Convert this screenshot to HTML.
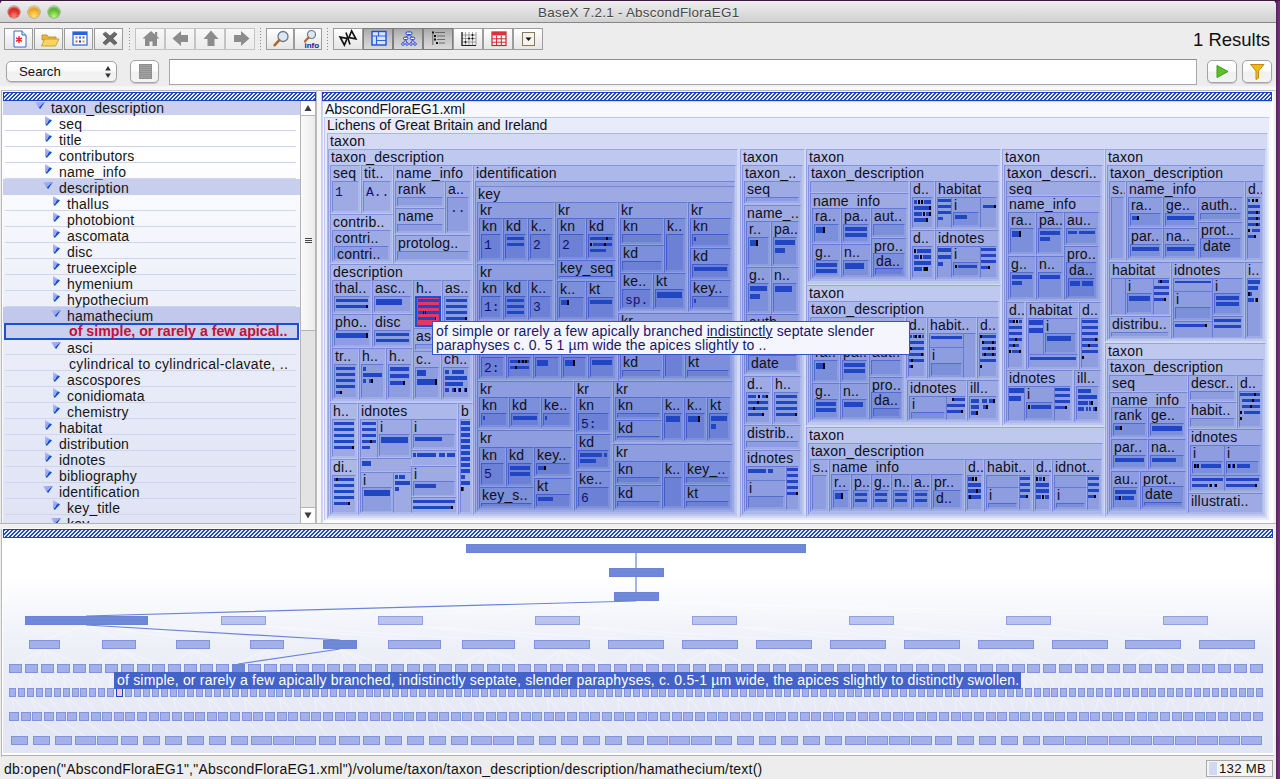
<!DOCTYPE html><html><head><meta charset="utf-8"><title>BaseX 7.2.1 - AbscondFloraEG1</title><style>
*{box-sizing:border-box;margin:0;padding:0}
html,body{width:1280px;height:779px;overflow:hidden;background:linear-gradient(90deg,#4b1d52 1276px,#5a2060 1276.5px,#7c2a7e 1279px);font-family:"Liberation Sans",sans-serif;font-size:14px;color:#111}
#win{position:absolute;left:0;top:0;width:1276px;height:779px;background:#ededed;border-radius:5px 5px 0 0;overflow:hidden}
#title{position:absolute;left:0;top:0;width:1276px;height:23px;background:linear-gradient(#f0f0f0,#d0d0d0);border-bottom:1px solid #868686;text-align:center;line-height:25px;font-size:13.4px;letter-spacing:.27px;color:#484848;text-shadow:0 1px 0 rgba(255,255,255,.55);border-radius:5px 5px 0 0}
#title span{position:absolute;left:538px;top:0;white-space:nowrap}
.tl{position:absolute;top:6px;width:12px;height:12px;border-radius:6px}
.abs{position:absolute}
.tb{position:absolute;top:28px;height:22px;border:1px solid #9c9c9c;background:linear-gradient(#ffffff,#f1f1f1 50%,#e6e6e6)}
.tb.dis{border-color:#c4c4c4;background:linear-gradient(#f7f7f7,#ececec)}
.tb.on{border-color:#7e7e7e;background:linear-gradient(#a9a9a9,#c4c4c4 45%,#d9d9d9)}
.tb svg{position:absolute;left:0;top:-1px}
.sep{position:absolute;top:28px;width:1px;height:22px;background:repeating-linear-gradient(#8c8c8c 0 1px,transparent 1px 3px)}
.rb{position:absolute;border:1px solid #a4a4a4;border-radius:5px;background:linear-gradient(#ffffff,#fbfbfb 48%,#f0f0f0 52%,#f4f4f4);box-shadow:0 1px 1px rgba(0,0,0,.18)}
.hatch{position:absolute;height:9px;border:1px solid #1c3fc4;background:repeating-linear-gradient(135deg,#2447cc 0 1.25px,#eef0ff 1.25px 2.828px)}
.panel{position:absolute;overflow:hidden}
.row{position:absolute;left:0;width:297px;height:16px}.row:before{content:'';position:absolute;left:2px;top:15px;width:291px;height:1px;background:#cfd5ef}.row.hl:before,.row.ns:before{display:none}
.row.hl{background:rgba(150,162,222,.5)}
.row i{position:absolute;top:1px;width:9px;height:10px}
.row i.c{background:linear-gradient(115deg,#b9c0f4 0%,#9aa6f0 50%,#2f66e8 52%,#1b56e0 100%);clip-path:polygon(0 0,100% 50%,10% 100%,0 82%)}
.row i.c{background:linear-gradient(124deg,#b9c1f5 0%,#949fee 50%,#1650e0 52%);clip-path:polygon(0 0,0 80%,24% 100%,100% 46%)}
.row i.o{width:10px;height:7px;background:linear-gradient(138deg,#b4bcf2 0%,#949fee 56%,#1650e0 58%);clip-path:polygon(0 0,100% 0,52% 100%,34% 78%)}
.row b{position:absolute;top:1px;line-height:16px;font-weight:normal;white-space:nowrap;font-size:14px;color:#151515;letter-spacing:.2px}

#map{position:absolute;left:322px;top:101px;width:951px;height:422px;overflow:hidden;background:#fff}
#map div{position:absolute}
.m{border:1px solid;overflow:hidden}
.m b{position:absolute;left:2px;top:-1px;font-weight:normal;font-size:14px;line-height:16px;white-space:nowrap;color:#0e0e18;letter-spacing:.2px}
.t{font:13px "Liberation Mono",monospace;color:#101070;white-space:nowrap;line-height:14px}
.tip{background:#f4f5fd;border:1px solid #3453c4;color:#17176a;font-size:14px;line-height:14px;padding:2px 0 0 3px;white-space:nowrap;letter-spacing:.12px}
</style></head><body><div id="win"><div id="title"><div class="tl" style="left:8px;background:radial-gradient(circle at 50% 85%,#ff8a7a 0,#e5342c 45%,#c0221c 75%,#8e1512 100%);box-shadow:inset 0 2px 2px -1px rgba(255,255,255,.8),0 0 0 .5px rgba(90,20,20,.6)"></div><div class="tl" style="left:28px;background:radial-gradient(circle at 50% 85%,#ffe27a 0,#f2b22c 45%,#d8921a 75%,#9a6510 100%);box-shadow:inset 0 2px 2px -1px rgba(255,255,255,.8),0 0 0 .5px rgba(110,70,10,.6)"></div><div class="tl" style="left:48px;background:radial-gradient(circle at 50% 85%,#c2f08a 0,#6cc43c 45%,#46a424 75%,#2a7014 100%);box-shadow:inset 0 2px 2px -1px rgba(255,255,255,.8),0 0 0 .5px rgba(30,80,15,.6)"></div><span>BaseX 7.2.1 - AbscondFloraEG1</span></div><div class="tb " style="left:4px;width:29px"><svg width="27" height="20" viewBox="0 0 27 20"><path d="M9 3h8l4 4v12H9z" fill="#fff" stroke="#3a62c8" stroke-width="1"/><path d="M17 3v4h4" fill="#dfe6fb" stroke="#3a62c8" stroke-width="1"/><path d="M14 8v7M11 9.8l6 3.6M17 9.8l-6 3.6" stroke="#e8242c" stroke-width="1.4"/></svg></div><div class="tb " style="left:34px;width:29px"><svg width="27" height="20" viewBox="0 0 27 20"><path d="M7 7h5l1.5 2H21v3H7z" fill="#e9b93a" stroke="#b98a1b" stroke-width=".8"/><path d="M9.5 11H24l-3.5 7H6.5z" fill="#f7d560" stroke="#c0921f" stroke-width=".8"/></svg></div><div class="tb " style="left:64px;width:29px"><svg width="27" height="20" viewBox="0 0 27 20"><rect x="8" y="4" width="14" height="13" fill="#fff" stroke="#2a62d8" stroke-width="1.2"/><rect x="8" y="4" width="14" height="3" fill="#2a62d8"/><rect x="10.5" y="8.5" width="2" height="2" fill="#8a7fd0"/><rect x="14" y="8.5" width="2" height="2" fill="#2a62d8"/><rect x="17.5" y="8.5" width="2" height="2" fill="#1e9a2e"/><rect x="10.5" y="12.5" width="2" height="2" fill="#e0602a"/><rect x="14" y="12.5" width="2" height="2" fill="#1a3aa8"/><rect x="17.5" y="12.5" width="2" height="2" fill="#e0a020"/></svg></div><div class="tb " style="left:94px;width:29px"><svg width="27" height="20" viewBox="0 0 27 20"><path d="M8 6.200l2.600-2 4.400 4 4.400-4 2.600 2-4.300 4.300 4.300 4.300-2.600 2-4.400-4-4.400 4-2.600-2 4.300-4.300z" fill="#6a6a6a" stroke="#444" stroke-width=".8"/></svg></div><div class="sep" style="left:129px"></div><div class="tb dis" style="left:135px;width:30px"><svg width="28" height="20" viewBox="0 0 28 20"><path d="M15 3l-8.500 7.500h2.500v7.500h4.500v-4.500h3v4.500h4.500v-7.500h2.500z" fill="#8c8c8c"/><rect x="19" y="4" width="2.200" height="5" fill="#8c8c8c"/></svg></div><div class="tb dis" style="left:165px;width:30px"><svg width="28" height="20" viewBox="0 0 28 20"><path d="M6.500 10.500l8.500-7.500v4h7v7h-7v4z" fill="#8c8c8c"/></svg></div><div class="tb dis" style="left:195px;width:30px"><svg width="28" height="20" viewBox="0 0 28 20"><path d="M15 2.500l7.500 8.500h-4v7h-7v-7h-4z" fill="#8c8c8c"/></svg></div><div class="tb dis" style="left:225px;width:30px"><svg width="28" height="20" viewBox="0 0 28 20"><path d="M23.500 10.500l-8.500-7.500v4h-7v7h7v4z" fill="#8c8c8c"/></svg></div><div class="sep" style="left:260px"></div><div class="tb " style="left:266px;width:28px"><svg width="26" height="20" viewBox="0 0 26 20"><circle cx="16" cy="8.5" r="5" fill="#dbe8f4" stroke="#6e7a86" stroke-width="1.3"/><path d="M12.3 12.2l-4.6 5" stroke="#b5652a" stroke-width="2.6" stroke-linecap="round"/></svg></div><div class="tb " style="left:294px;width:28px"><svg width="26" height="20" viewBox="0 0 26 20"><circle cx="16.5" cy="6.5" r="4" fill="#dbe8f4" stroke="#6e7a86" stroke-width="1.2"/><path d="M13.5 9.5l-3.6 4" stroke="#b5652a" stroke-width="2.2" stroke-linecap="round"/><text x="9.5" y="19.5" font-family="Liberation Sans,sans-serif" font-size="8" font-weight="bold" fill="#10189a">info</text></svg></div><div class="sep" style="left:327px"></div><div class="tb " style="left:333px;width:30px"><svg width="28" height="20" viewBox="0 0 28 20"><g transform="rotate(-28 14 10)" fill="none" stroke="#111" stroke-width="1.7" stroke-linejoin="miter"><path d="M7.500 5.500l5.500 4.500-5.500 4.500z"/><path d="M20.500 5.500l-5.500 4.500 5.500 4.500z"/></g><path d="M12 4.500l4 12" stroke="#111" stroke-width="1.600"/></svg></div><div class="tb on" style="left:363px;width:30px"><svg width="28" height="20" viewBox="0 0 28 20"><rect x="8" y="3.500" width="14" height="13.500" fill="#d8e6fd" stroke="#1a50d8" stroke-width="1.400"/><path d="M8 8h14M12.500 8v9M12.500 12.500h9.500M14.500 3.500v4.500" stroke="#2a62e0" stroke-width="1.200"/></svg></div><div class="tb on" style="left:393px;width:30px"><svg width="28" height="20" viewBox="0 0 28 20"><rect x="12" y="4" width="6" height="2.6" rx="1.3" fill="#fff" stroke="#1838d8" stroke-width="1"/><rect x="9.5" y="9.2" width="4.4" height="2.4" rx="1.2" fill="#fff" stroke="#1838d8" stroke-width="1"/><rect x="16.3" y="9.2" width="4.4" height="2.4" rx="1.2" fill="#fff" stroke="#1838d8" stroke-width="1"/><path d="M15 6.8l-3.2 2.2M15 6.8l3.4 2.2M11.6 11.8l-2.4 3M11.6 11.8l1.5 3M18.5 11.8l-1.5 3M18.5 11.8l2.4 3" stroke="#1838d8" stroke-width=".8"/><circle cx="9" cy="16" r="1.3" fill="#fff" stroke="#1838d8" stroke-width=".9"/><circle cx="13" cy="16" r="1.3" fill="#fff" stroke="#1838d8" stroke-width=".9"/><circle cx="17" cy="16" r="1.3" fill="#fff" stroke="#1838d8" stroke-width=".9"/><circle cx="21" cy="16" r="1.3" fill="#fff" stroke="#1838d8" stroke-width=".9"/></svg></div><div class="tb on" style="left:423px;width:30px"><svg width="28" height="20" viewBox="0 0 28 20"><rect x="8" y="3.5" width="2" height="2" fill="#111"/><rect x="10" y="7" width="2" height="2" fill="#111"/><rect x="10" y="10.5" width="2" height="2" fill="#111"/><rect x="12" y="14" width="2" height="2" fill="#111"/><path d="M8.8 5v12M11 4.5h10M13 8h8M13 11.5h8M15 15h6" stroke="#6a6a6a" stroke-width="1"/></svg></div><div class="tb " style="left:453px;width:30px"><svg width="28" height="20" viewBox="0 0 28 20"><path d="M8 4v13.5h14M11.5 4v13.5M15 4v13.5M18.5 4v13.5M22 4v13.5M8 7h14M8 10.5h14M8 14h14" stroke="#8a8a8a" stroke-width=".8" fill="none"/><path d="M8 4v13.5h14" stroke="#222" stroke-width="1.2" fill="none"/><circle cx="11.5" cy="14" r="1" fill="#111"/><circle cx="15" cy="10.5" r="1" fill="#111"/><circle cx="18.500" cy="10.5" r="1" fill="#111"/><circle cx="18.5" cy="7" r="1" fill="#111"/></svg></div><div class="tb " style="left:483px;width:30px"><svg width="28" height="20" viewBox="0 0 28 20"><rect x="8" y="4" width="14" height="13.5" fill="#fff" stroke="#d8202c" stroke-width="1.2"/><rect x="8" y="4" width="14" height="3.4" fill="#e0303a"/><path d="M8 10.8h14M8 14.200h14M12.600 7.400v10M17.300 7.400v10" stroke="#d8202c" stroke-width="1"/></svg></div><div class="tb " style="left:513px;width:30px"><svg width="28" height="20" viewBox="0 0 28 20"><rect x="8.500" y="4.500" width="12" height="13" fill="#f6f3ea" stroke="#8a7a5a" stroke-width="1"/><path d="M11.500 9.500h6l-3 3.500z" fill="#111"/></svg></div><div class="abs" style="left:1193px;top:28px;font-size:18.5px;color:#111;white-space:nowrap;line-height:24px">1 Results</div><div class="rb" style="left:6px;top:61px;width:111px;height:21px"><span class="abs" style="left:12px;top:1px;line-height:18px;font-size:13.2px">Search</span><svg class="abs" style="left:97px;top:3px" width="8" height="14" viewBox="0 0 8 14"><path d="M1.200 5.500L4 1l2.800 4.500zM1.200 8.500L4 13l2.800-4.500z" fill="#333"/></svg></div><div class="rb" style="left:130px;top:60px;width:29px;height:23px"><div class="abs" style="left:8px;top:3px;width:13px;height:15px;background:repeating-linear-gradient(#a2a2a2 0 1px,#939393 1px 2px);border:1px solid #8e8e8e"></div></div><div class="abs" style="left:169px;top:59px;width:1028px;height:26px;background:#fff;border:1px solid #a8a8a8;border-top-color:#8e8e8e"></div><div class="rb" style="left:1207px;top:60px;width:30px;height:23px"><svg width="28" height="21" viewBox="0 0 28 21"><path d="M9 4.500l11 6-11 6z" fill="#5cc02a" stroke="#3e9a18" stroke-width="1"/></svg></div><div class="rb" style="left:1242px;top:60px;width:30px;height:23px"><svg width="28" height="21" viewBox="0 0 28 21"><path d="M7.500 3.500h13.500l-5.500 6.500v7l-2.500 1.500v-8.500z" fill="#f2b818" stroke="#c08a10" stroke-width="1"/></svg></div><div class="abs" style="left:0;top:86px;width:1276px;height:4px;background:linear-gradient(#f4f4f4,#fdfdfd)"></div><div class="abs" style="left:1px;top:90px;width:1274px;height:1px;background:#b9b9b9"></div><div class="abs" style="left:1px;top:90px;width:1px;height:667px;background:#b9b9b9"></div><div class="abs" style="left:2px;top:91px;width:1272px;height:433px;background:#fbfbfb"></div><div class="hatch" style="left:3px;top:92px;width:313px"></div><div class="panel" style="left:3px;top:101px;width:297px;height:422px;background:linear-gradient(#ffffff 0,#ffffff 12%,#eef0fa 45%,#dfe3f4 100%)"><div class="row hl" style="top:-2px"><i class="o" style="left:32px;top:3px"></i><b style="left:48px">taxon_description</b></div><div class="row" style="top:14px"><i class="c" style="left:42px;width:7px;height:10px;top:1px"></i><b style="left:56px">seq</b></div><div class="row" style="top:30px"><i class="c" style="left:42px;width:7px;height:10px;top:1px"></i><b style="left:56px">title</b></div><div class="row" style="top:46px"><i class="c" style="left:42px;width:7px;height:10px;top:1px"></i><b style="left:56px">contributors</b></div><div class="row" style="top:62px"><i class="c" style="left:42px;width:7px;height:10px;top:1px"></i><b style="left:56px">name_info</b></div><div class="row hl" style="top:78px"><i class="o" style="left:40px;top:3px"></i><b style="left:56px">description</b></div><div class="row" style="top:94px"><i class="c" style="left:50px;width:7px;height:10px;top:1px"></i><b style="left:64px">thallus</b></div><div class="row" style="top:110px"><i class="c" style="left:50px;width:7px;height:10px;top:1px"></i><b style="left:64px">photobiont</b></div><div class="row" style="top:126px"><i class="c" style="left:50px;width:7px;height:10px;top:1px"></i><b style="left:64px">ascomata</b></div><div class="row" style="top:142px"><i class="c" style="left:50px;width:7px;height:10px;top:1px"></i><b style="left:64px">disc</b></div><div class="row" style="top:158px"><i class="c" style="left:50px;width:7px;height:10px;top:1px"></i><b style="left:64px">trueexciple</b></div><div class="row" style="top:174px"><i class="c" style="left:50px;width:7px;height:10px;top:1px"></i><b style="left:64px">hymenium</b></div><div class="row" style="top:190px"><i class="c" style="left:50px;width:7px;height:10px;top:1px"></i><b style="left:64px">hypothecium</b></div><div class="row hl" style="top:206px"><i class="o" style="left:48px;top:3px"></i><b style="left:64px">hamathecium</b></div><div class="row ns" style="top:222px;left:1px;width:295px;height:17px;background:#c9cfec;border:2px solid #1a50d4"></div><div class="row ns" style="top:222px"><b style="left:66px;font-weight:bold;color:#c4103a;font-size:14.2px;letter-spacing:0;top:0">of simple, or rarely a few apical..</b></div><div class="row" style="top:238px"><i class="o" style="left:48px;top:3px"></i><b style="left:64px">asci</b></div><div class="row" style="top:254px"><b style="left:66px;letter-spacing:.32px">cylindrical to cylindrical-clavate, ..</b></div><div class="row" style="top:270px"><i class="c" style="left:50px;width:7px;height:10px;top:1px"></i><b style="left:64px">ascospores</b></div><div class="row" style="top:286px"><i class="c" style="left:50px;width:7px;height:10px;top:1px"></i><b style="left:64px">conidiomata</b></div><div class="row" style="top:302px"><i class="c" style="left:50px;width:7px;height:10px;top:1px"></i><b style="left:64px">chemistry</b></div><div class="row" style="top:318px"><i class="c" style="left:42px;width:7px;height:10px;top:1px"></i><b style="left:56px">habitat</b></div><div class="row" style="top:334px"><i class="c" style="left:42px;width:7px;height:10px;top:1px"></i><b style="left:56px">distribution</b></div><div class="row" style="top:350px"><i class="c" style="left:42px;width:7px;height:10px;top:1px"></i><b style="left:56px">idnotes</b></div><div class="row" style="top:366px"><i class="c" style="left:42px;width:7px;height:10px;top:1px"></i><b style="left:56px">bibliography</b></div><div class="row" style="top:382px"><i class="o" style="left:40px;top:3px"></i><b style="left:56px">identification</b></div><div class="row" style="top:398px"><i class="c" style="left:50px;width:7px;height:10px;top:1px"></i><b style="left:64px">key_title</b></div><div class="row" style="top:414px"><i class="o" style="left:48px;top:3px"></i><b style="left:64px">key</b></div></div><div class="abs" style="left:300px;top:101px;width:16px;height:422px;background:#e3e3e3;border-left:1px solid #b4b4b4;border-right:1px solid #b4b4b4"></div><div class="abs" style="left:301px;top:101px;width:14px;height:15px;background:#fdfdfd;border-bottom:1px solid #b4b4b4"><svg width="14" height="14" viewBox="0 0 14 14"><path d="M3.500 10L7 4l3.500 6z" fill="#3c3c3c"/></svg></div><div class="abs" style="left:301px;top:116px;width:14px;height:215px;background:linear-gradient(90deg,#fafafa,#ececec);border-bottom:1px solid #b4b4b4"><div class="abs" style="left:4px;top:122px;width:7px;height:1px;background:#444;box-shadow:0 2px 0 #444,0 4px 0 #444"></div></div><div class="abs" style="left:301px;top:507px;width:14px;height:16px;background:#fdfdfd;border-top:1px solid #b4b4b4"><svg width="14" height="14" viewBox="0 0 14 14"><path d="M3.500 4.500L7 10.500l3.500-6z" fill="#3c3c3c"/></svg></div><div class="abs" style="left:316px;top:91px;width:6px;height:433px;background:#f7f7f7;border-left:1px solid #bdbdbd;border-right:1px solid #cfcfcf"></div><div class="abs" style="left:0;top:523px;width:1276px;height:1px;background:#b4b4b4"></div><div class="abs" style="left:0;top:524px;width:1276px;height:5px;background:#f0f0f0"></div><div class="hatch" style="left:322px;top:92px;width:950px"></div><div id="map"><div class="m" style="left:0px;top:0px;width:950px;height:422px;background:#f7f8fe;border-color:#cdd4f2 #ffffff #ffffff #cdd4f2"><b><span style="letter-spacing:0">AbscondFloraEG1.xml</span></b></div><div class="m" style="left:2px;top:16px;width:946px;height:404px;background:#e8ebfa;border-color:#bec7ee #fafbff #fafbff #bec7ee"><b><span style="letter-spacing:0">Lichens of Great Britain and Ireland</span></b></div><div class="m" style="left:5px;top:32px;width:941px;height:386px;background:#d4daf4;border-color:#aab6e8 #e6eafa #e6eafa #aab6e8"><b>taxon</b></div><div class="m" style="left:6px;top:48px;width:410px;height:368px;background:#bfc8ee;border-color:#95a4e2 #d1d8f4 #d1d8f4 #95a4e2"><b>taxon_description</b></div><div class="m" style="left:8px;top:64px;width:31px;height:49px;background:#acb8e9;border-color:#8294dd #bec8ef #bec8ef #8294dd"><b>seq</b></div><div class="m" style="left:10px;top:80px;width:27px;height:31px;background:#9daae4;border-color:#7386d8 #afbaea #afbaea #7386d8"></div><div class="t" style="left:13px;top:85px">1</div><div class="m" style="left:39px;top:64px;width:32px;height:49px;background:#acb8e9;border-color:#8294dd #bec8ef #bec8ef #8294dd"><b>tit..</b></div><div class="m" style="left:41px;top:80px;width:28px;height:31px;background:#9daae4;border-color:#7386d8 #afbaea #afbaea #7386d8"></div><div class="t" style="left:44px;top:85px">A..</div><div class="m" style="left:71px;top:64px;width:80px;height:99px;background:#acb8e9;border-color:#8294dd #bec8ef #bec8ef #8294dd"><b>name_info</b></div><div class="m" style="left:73px;top:80px;width:50px;height:27px;background:#9daae4;border-color:#7386d8 #afbaea #afbaea #7386d8"><b>rank</b></div><div class="m" style="left:75px;top:96px;width:46px;height:9px;background:#8d9de0;border-color:#6379d4 #9fade6 #9fade6 #6379d4"></div><div class="m" style="left:123px;top:80px;width:26px;height:53px;background:#9daae4;border-color:#7386d8 #afbaea #afbaea #7386d8"><b>a..</b></div><div class="m" style="left:125px;top:96px;width:22px;height:35px;background:#8d9de0;border-color:#6379d4 #9fade6 #9fade6 #6379d4"></div><div class="t" style="left:128px;top:101px">..</div><div class="m" style="left:73px;top:107px;width:50px;height:26px;background:#9daae4;border-color:#7386d8 #afbaea #afbaea #7386d8"><b>name</b></div><div class="m" style="left:75px;top:123px;width:46px;height:8px;background:#8d9de0;border-color:#6379d4 #9fade6 #9fade6 #6379d4"></div><div class="m" style="left:73px;top:134px;width:76px;height:27px;background:#9daae4;border-color:#7386d8 #afbaea #afbaea #7386d8"><b>protolog..</b></div><div class="m" style="left:75px;top:150px;width:72px;height:9px;background:#8d9de0;border-color:#6379d4 #9fade6 #9fade6 #6379d4"></div><div class="m" style="left:8px;top:113px;width:63px;height:50px;background:#acb8e9;border-color:#8294dd #bec8ef #bec8ef #8294dd"><b>contrib..</b></div><div class="m" style="left:10px;top:129px;width:59px;height:32px;background:#9daae4;border-color:#7386d8 #afbaea #afbaea #7386d8"><b>contri..</b></div><div class="m" style="left:12px;top:145px;width:55px;height:14px;background:#8d9de0;border-color:#6379d4 #9fade6 #9fade6 #6379d4"><b>contri..</b></div><div class="m" style="left:8px;top:163px;width:143px;height:138px;background:#acb8e9;border-color:#8294dd #bec8ef #bec8ef #8294dd"><b>description</b></div><div class="m" style="left:10px;top:179px;width:40px;height:34px;background:#9daae4;border-color:#7386d8 #afbaea #afbaea #7386d8"><b>thal..</b></div><div class="m" style="left:12px;top:195px;width:36px;height:16px;background:#8d9de0;border-color:#6379d4 #9fade6 #9fade6 #6379d4"></div><div class="r" style="left:14px;top:198px;width:32px;height:3px;background:#2046c4"></div><div class="r" style="left:14px;top:204px;width:32px;height:3px;background:#2046c4"></div><div class="r" style="left:44px;top:204px;width:2px;height:3px;background:#000"></div><div class="m" style="left:50px;top:179px;width:41px;height:34px;background:#9daae4;border-color:#7386d8 #afbaea #afbaea #7386d8"><b>asc..</b></div><div class="m" style="left:52px;top:195px;width:37px;height:16px;background:#8d9de0;border-color:#6379d4 #9fade6 #9fade6 #6379d4"></div><div class="r" style="left:54px;top:198px;width:26px;height:6px;background:#2046c4"></div><div class="m" style="left:91px;top:179px;width:29px;height:49px;background:#9daae4;border-color:#7386d8 #afbaea #afbaea #7386d8"><b>h..</b></div><div class="r" style="left:93px;top:195px;width:26px;height:31px;background:#e43763;border:2px solid #1f4fd0"></div><div class="r" style="left:96px;top:198px;width:21px;height:3px;background:#2046c4"></div><div class="r" style="left:96px;top:204px;width:21px;height:3px;background:#2046c4"></div><div class="r" style="left:96px;top:210px;width:21px;height:3px;background:#2046c4"></div><div class="r" style="left:96px;top:216px;width:18px;height:3px;background:#2046c4"></div><div class="r" style="left:101px;top:210px;width:1px;height:3px;background:#000"></div><div class="r" style="left:103px;top:210px;width:1px;height:3px;background:#000"></div><div class="r" style="left:113px;top:216px;width:1px;height:3px;background:#000"></div><div class="m" style="left:120px;top:179px;width:29px;height:66px;background:#9daae4;border-color:#7386d8 #afbaea #afbaea #7386d8"><b>as..</b></div><div class="m" style="left:122px;top:195px;width:25px;height:48px;background:#8d9de0;border-color:#6379d4 #9fade6 #9fade6 #6379d4"></div><div class="r" style="left:124px;top:198px;width:21px;height:3px;background:#2046c4"></div><div class="r" style="left:124px;top:204px;width:21px;height:3px;background:#2046c4"></div><div class="r" style="left:124px;top:210px;width:21px;height:3px;background:#2046c4"></div><div class="r" style="left:124px;top:216px;width:21px;height:3px;background:#2046c4"></div><div class="r" style="left:143px;top:216px;width:2px;height:3px;background:#000"></div><div class="r" style="left:124px;top:222px;width:21px;height:3px;background:#2046c4"></div><div class="r" style="left:124px;top:228px;width:21px;height:3px;background:#2046c4"></div><div class="r" style="left:124px;top:234px;width:21px;height:3px;background:#2046c4"></div><div class="m" style="left:10px;top:213px;width:40px;height:34px;background:#9daae4;border-color:#7386d8 #afbaea #afbaea #7386d8"><b>pho..</b></div><div class="m" style="left:12px;top:229px;width:36px;height:16px;background:#8d9de0;border-color:#6379d4 #9fade6 #9fade6 #6379d4"></div><div class="r" style="left:14px;top:232px;width:32px;height:5px;background:#2046c4"></div><div class="r" style="left:44px;top:232px;width:2px;height:5px;background:#000"></div><div class="m" style="left:50px;top:213px;width:41px;height:34px;background:#9daae4;border-color:#7386d8 #afbaea #afbaea #7386d8"><b>disc</b></div><div class="m" style="left:52px;top:229px;width:37px;height:16px;background:#8d9de0;border-color:#6379d4 #9fade6 #9fade6 #6379d4"></div><div class="r" style="left:54px;top:232px;width:33px;height:3px;background:#2046c4"></div><div class="r" style="left:54px;top:238px;width:33px;height:3px;background:#2046c4"></div><div class="m" style="left:91px;top:227px;width:29px;height:24px;background:#9daae4;border-color:#7386d8 #afbaea #afbaea #7386d8"><b>asc</b></div><div class="m" style="left:93px;top:243px;width:25px;height:6px;background:#8d9de0;border-color:#6379d4 #9fade6 #9fade6 #6379d4"></div><div class="m" style="left:10px;top:247px;width:27px;height:52px;background:#9daae4;border-color:#7386d8 #afbaea #afbaea #7386d8"><b>tr..</b></div><div class="m" style="left:12px;top:263px;width:23px;height:34px;background:#8d9de0;border-color:#6379d4 #9fade6 #9fade6 #6379d4"></div><div class="r" style="left:14px;top:266px;width:19px;height:3px;background:#2046c4"></div><div class="r" style="left:14px;top:272px;width:19px;height:3px;background:#2046c4"></div><div class="r" style="left:14px;top:278px;width:19px;height:3px;background:#2046c4"></div><div class="r" style="left:14px;top:284px;width:19px;height:3px;background:#2046c4"></div><div class="r" style="left:14px;top:290px;width:6px;height:3px;background:#2046c4"></div><div class="r" style="left:18px;top:290px;width:2px;height:3px;background:#000"></div><div class="m" style="left:37px;top:247px;width:27px;height:52px;background:#9daae4;border-color:#7386d8 #afbaea #afbaea #7386d8"><b>h..</b></div><div class="m" style="left:39px;top:263px;width:23px;height:34px;background:#8d9de0;border-color:#6379d4 #9fade6 #9fade6 #6379d4"></div><div class="r" style="left:41px;top:266px;width:3px;height:4px;background:#2046c4"></div><div class="r" style="left:41px;top:272px;width:19px;height:4px;background:#2046c4"></div><div class="r" style="left:41px;top:278px;width:3px;height:4px;background:#2046c4"></div><div class="r" style="left:47px;top:278px;width:4px;height:4px;background:#2046c4"></div><div class="r" style="left:49px;top:278px;width:2px;height:4px;background:#000"></div><div class="m" style="left:64px;top:247px;width:27px;height:52px;background:#9daae4;border-color:#7386d8 #afbaea #afbaea #7386d8"><b>h..</b></div><div class="m" style="left:66px;top:263px;width:23px;height:34px;background:#8d9de0;border-color:#6379d4 #9fade6 #9fade6 #6379d4"></div><div class="r" style="left:68px;top:266px;width:19px;height:4px;background:#2046c4"></div><div class="r" style="left:68px;top:273px;width:19px;height:4px;background:#2046c4"></div><div class="r" style="left:68px;top:280px;width:15px;height:4px;background:#2046c4"></div><div class="r" style="left:81px;top:280px;width:2px;height:4px;background:#000"></div><div class="m" style="left:91px;top:250px;width:28px;height:49px;background:#9daae4;border-color:#7386d8 #afbaea #afbaea #7386d8"><b>c..</b></div><div class="m" style="left:93px;top:266px;width:24px;height:31px;background:#8d9de0;border-color:#6379d4 #9fade6 #9fade6 #6379d4"></div><div class="r" style="left:95px;top:269px;width:9px;height:6px;background:#2046c4"></div><div class="r" style="left:95px;top:278px;width:20px;height:6px;background:#2046c4"></div><div class="r" style="left:113px;top:278px;width:2px;height:6px;background:#000"></div><div class="m" style="left:119px;top:250px;width:30px;height:49px;background:#9daae4;border-color:#7386d8 #afbaea #afbaea #7386d8"><b>ch..</b></div><div class="m" style="left:121px;top:266px;width:26px;height:31px;background:#8d9de0;border-color:#6379d4 #9fade6 #9fade6 #6379d4"></div><div class="r" style="left:123px;top:269px;width:4px;height:4px;background:#2046c4"></div><div class="r" style="left:130px;top:269px;width:12px;height:4px;background:#2046c4"></div><div class="r" style="left:123px;top:275px;width:22px;height:4px;background:#2046c4"></div><div class="r" style="left:123px;top:281px;width:18px;height:4px;background:#2046c4"></div><div class="r" style="left:123px;top:287px;width:4px;height:4px;background:#2046c4"></div><div class="r" style="left:130px;top:287px;width:4px;height:4px;background:#2046c4"></div><div class="r" style="left:132px;top:287px;width:2px;height:4px;background:#000"></div><div class="r" style="left:136px;top:287px;width:3px;height:4px;background:#2046c4"></div><div class="r" style="left:137px;top:287px;width:2px;height:4px;background:#000"></div><div class="r" style="left:142px;top:287px;width:3px;height:4px;background:#2046c4"></div><div class="r" style="left:143px;top:287px;width:2px;height:4px;background:#000"></div><div class="m" style="left:8px;top:302px;width:28px;height:56px;background:#acb8e9;border-color:#8294dd #bec8ef #bec8ef #8294dd"><b>h..</b></div><div class="m" style="left:10px;top:318px;width:24px;height:38px;background:#9daae4;border-color:#7386d8 #afbaea #afbaea #7386d8"></div><div class="r" style="left:12px;top:321px;width:20px;height:3px;background:#2046c4"></div><div class="r" style="left:12px;top:327px;width:20px;height:3px;background:#2046c4"></div><div class="r" style="left:12px;top:333px;width:20px;height:3px;background:#2046c4"></div><div class="r" style="left:12px;top:339px;width:20px;height:3px;background:#2046c4"></div><div class="r" style="left:12px;top:345px;width:20px;height:3px;background:#2046c4"></div><div class="r" style="left:30px;top:345px;width:2px;height:3px;background:#000"></div><div class="m" style="left:8px;top:358px;width:28px;height:56px;background:#acb8e9;border-color:#8294dd #bec8ef #bec8ef #8294dd"><b>di..</b></div><div class="m" style="left:10px;top:374px;width:24px;height:38px;background:#9daae4;border-color:#7386d8 #afbaea #afbaea #7386d8"></div><div class="r" style="left:12px;top:377px;width:2px;height:3px;background:#2046c4"></div><div class="r" style="left:14px;top:377px;width:2px;height:3px;background:#2046c4"></div><div class="r" style="left:14px;top:377px;width:2px;height:3px;background:#000"></div><div class="r" style="left:16px;top:377px;width:16px;height:3px;background:#2046c4"></div><div class="r" style="left:12px;top:383px;width:20px;height:3px;background:#2046c4"></div><div class="r" style="left:12px;top:389px;width:20px;height:3px;background:#2046c4"></div><div class="r" style="left:12px;top:395px;width:20px;height:3px;background:#2046c4"></div><div class="r" style="left:12px;top:401px;width:16px;height:3px;background:#2046c4"></div><div class="r" style="left:26px;top:401px;width:2px;height:3px;background:#000"></div><div class="m" style="left:36px;top:302px;width:100px;height:112px;background:#acb8e9;border-color:#8294dd #bec8ef #bec8ef #8294dd"><b>idnotes</b></div><div class="m" style="left:38px;top:318px;width:18px;height:39px;background:#9daae4;border-color:#7386d8 #afbaea #afbaea #7386d8"></div><div class="r" style="left:40px;top:321px;width:14px;height:3px;background:#2046c4"></div><div class="r" style="left:40px;top:327px;width:14px;height:3px;background:#2046c4"></div><div class="r" style="left:40px;top:333px;width:14px;height:3px;background:#2046c4"></div><div class="r" style="left:40px;top:339px;width:10px;height:3px;background:#2046c4"></div><div class="r" style="left:48px;top:339px;width:2px;height:3px;background:#000"></div><div class="r" style="left:50px;top:339px;width:4px;height:3px;background:#2046c4"></div><div class="r" style="left:40px;top:345px;width:8px;height:3px;background:#2046c4"></div><div class="m" style="left:55px;top:318px;width:35px;height:39px;background:#9daae4;border-color:#7386d8 #afbaea #afbaea #7386d8"><b>i</b></div><div class="m" style="left:57px;top:333px;width:31px;height:22px;background:#8d9de0;border-color:#6379d4 #9fade6 #9fade6 #6379d4"></div><div class="r" style="left:59px;top:336px;width:27px;height:6px;background:#2046c4"></div><div class="m" style="left:89px;top:318px;width:46px;height:31px;background:#9daae4;border-color:#7386d8 #afbaea #afbaea #7386d8"><b>i</b></div><div class="m" style="left:91px;top:333px;width:42px;height:14px;background:#8d9de0;border-color:#6379d4 #9fade6 #9fade6 #6379d4"></div><div class="r" style="left:93px;top:336px;width:27px;height:4px;background:#2046c4"></div><div class="m" style="left:89px;top:349px;width:46px;height:16px;background:#9daae4;border-color:#7386d8 #afbaea #afbaea #7386d8"></div><div class="r" style="left:91px;top:352px;width:3px;height:4px;background:#2046c4"></div><div class="r" style="left:95px;top:352px;width:19px;height:4px;background:#2046c4"></div><div class="r" style="left:117px;top:352px;width:6px;height:4px;background:#2046c4"></div><div class="r" style="left:125px;top:352px;width:8px;height:4px;background:#2046c4"></div><div class="m" style="left:38px;top:357px;width:52px;height:14px;background:#9daae4;border-color:#7386d8 #afbaea #afbaea #7386d8"></div><div class="r" style="left:40px;top:360px;width:9px;height:5px;background:#2046c4"></div><div class="m" style="left:38px;top:371px;width:34px;height:41px;background:#9daae4;border-color:#7386d8 #afbaea #afbaea #7386d8"><b>i</b></div><div class="m" style="left:40px;top:386px;width:30px;height:25px;background:#8d9de0;border-color:#6379d4 #9fade6 #9fade6 #6379d4"></div><div class="r" style="left:42px;top:389px;width:26px;height:6px;background:#2046c4"></div><div class="m" style="left:71px;top:371px;width:19px;height:41px;background:#9daae4;border-color:#7386d8 #afbaea #afbaea #7386d8"></div><div class="r" style="left:73px;top:374px;width:3px;height:4px;background:#2046c4"></div><div class="r" style="left:77px;top:374px;width:6px;height:4px;background:#2046c4"></div><div class="r" style="left:73px;top:380px;width:15px;height:4px;background:#2046c4"></div><div class="r" style="left:73px;top:386px;width:4px;height:4px;background:#2046c4"></div><div class="m" style="left:89px;top:365px;width:46px;height:31px;background:#9daae4;border-color:#7386d8 #afbaea #afbaea #7386d8"><b>i</b></div><div class="m" style="left:91px;top:380px;width:42px;height:15px;background:#8d9de0;border-color:#6379d4 #9fade6 #9fade6 #6379d4"></div><div class="r" style="left:93px;top:383px;width:21px;height:4px;background:#2046c4"></div><div class="m" style="left:89px;top:396px;width:46px;height:16px;background:#9daae4;border-color:#7386d8 #afbaea #afbaea #7386d8"></div><div class="r" style="left:91px;top:399px;width:42px;height:3px;background:#2046c4"></div><div class="r" style="left:91px;top:405px;width:40px;height:3px;background:#2046c4"></div><div class="r" style="left:129px;top:405px;width:2px;height:3px;background:#000"></div><div class="m" style="left:136px;top:302px;width:15px;height:112px;background:#acb8e9;border-color:#8294dd #bec8ef #bec8ef #8294dd"><b>b</b></div><div class="m" style="left:138px;top:318px;width:11px;height:94px;background:#9daae4;border-color:#7386d8 #afbaea #afbaea #7386d8"></div><div class="r" style="left:139px;top:320px;width:9px;height:4px;background:#2046c4"></div><div class="r" style="left:139px;top:326px;width:9px;height:4px;background:#2046c4"></div><div class="r" style="left:139px;top:332px;width:9px;height:4px;background:#2046c4"></div><div class="r" style="left:139px;top:338px;width:9px;height:4px;background:#2046c4"></div><div class="r" style="left:139px;top:344px;width:9px;height:4px;background:#2046c4"></div><div class="r" style="left:139px;top:350px;width:9px;height:4px;background:#2046c4"></div><div class="r" style="left:139px;top:356px;width:9px;height:4px;background:#2046c4"></div><div class="r" style="left:139px;top:362px;width:9px;height:4px;background:#2046c4"></div><div class="r" style="left:139px;top:368px;width:9px;height:4px;background:#2046c4"></div><div class="r" style="left:139px;top:374px;width:4px;height:4px;background:#2046c4"></div><div class="r" style="left:139px;top:380px;width:9px;height:4px;background:#2046c4"></div><div class="r" style="left:139px;top:386px;width:3px;height:4px;background:#2046c4"></div><div class="r" style="left:139px;top:386px;width:2px;height:4px;background:#000"></div><div class="m" style="left:151px;top:64px;width:263px;height:350px;background:#acb8e9;border-color:#8294dd #bec8ef #bec8ef #8294dd"><b>identification</b></div><div class="m" style="left:153px;top:80px;width:260px;height:6px;background:#9daae4;border-color:#7386d8 #afbaea #afbaea #7386d8"></div><div class="m" style="left:153px;top:85px;width:260px;height:327px;background:#9daae4;border-color:#7386d8 #afbaea #afbaea #7386d8"><b>key</b></div><div class="m" style="left:155px;top:101px;width:78px;height:61px;background:#8d9de0;border-color:#6379d4 #9fade6 #9fade6 #6379d4"><b>kr</b></div><div class="m" style="left:157px;top:117px;width:24px;height:43px;background:#7c8fdb;border-color:#526bcf #8e9fe1 #8e9fe1 #526bcf"><b>kn</b></div><div class="m" style="left:159px;top:133px;width:20px;height:25px;background:#6c80d6;border-color:#425cca #7e90dc #7e90dc #425cca"></div><div class="t" style="left:162px;top:138px">1</div><div class="m" style="left:181px;top:117px;width:25px;height:43px;background:#7c8fdb;border-color:#526bcf #8e9fe1 #8e9fe1 #526bcf"><b>kd</b></div><div class="m" style="left:183px;top:133px;width:21px;height:25px;background:#6c80d6;border-color:#425cca #7e90dc #7e90dc #425cca"></div><div class="r" style="left:185px;top:136px;width:17px;height:3px;background:#2046c4"></div><div class="r" style="left:185px;top:142px;width:17px;height:3px;background:#2046c4"></div><div class="m" style="left:206px;top:117px;width:25px;height:43px;background:#7c8fdb;border-color:#526bcf #8e9fe1 #8e9fe1 #526bcf"><b>k..</b></div><div class="m" style="left:208px;top:133px;width:21px;height:25px;background:#6c80d6;border-color:#425cca #7e90dc #7e90dc #425cca"></div><div class="t" style="left:211px;top:138px">2</div><div class="m" style="left:233px;top:101px;width:63px;height:120px;background:#8d9de0;border-color:#6379d4 #9fade6 #9fade6 #6379d4"><b>kr</b></div><div class="m" style="left:235px;top:117px;width:29px;height:42px;background:#7c8fdb;border-color:#526bcf #8e9fe1 #8e9fe1 #526bcf"><b>kn</b></div><div class="m" style="left:237px;top:133px;width:25px;height:24px;background:#6c80d6;border-color:#425cca #7e90dc #7e90dc #425cca"></div><div class="t" style="left:240px;top:138px">2</div><div class="m" style="left:264px;top:117px;width:30px;height:42px;background:#7c8fdb;border-color:#526bcf #8e9fe1 #8e9fe1 #526bcf"><b>kd</b></div><div class="m" style="left:266px;top:133px;width:26px;height:24px;background:#6c80d6;border-color:#425cca #7e90dc #7e90dc #425cca"></div><div class="r" style="left:268px;top:136px;width:22px;height:3px;background:#2046c4"></div><div class="r" style="left:285px;top:136px;width:1px;height:3px;background:#2046c4"></div><div class="r" style="left:284px;top:136px;width:2px;height:3px;background:#000"></div><div class="r" style="left:268px;top:142px;width:2px;height:3px;background:#2046c4"></div><div class="r" style="left:268px;top:142px;width:2px;height:3px;background:#000"></div><div class="r" style="left:271px;top:142px;width:19px;height:3px;background:#2046c4"></div><div class="r" style="left:283px;top:142px;width:1px;height:3px;background:#2046c4"></div><div class="r" style="left:282px;top:142px;width:2px;height:3px;background:#000"></div><div class="r" style="left:268px;top:148px;width:16px;height:3px;background:#2046c4"></div><div class="m" style="left:235px;top:159px;width:59px;height:20px;background:#7c8fdb;border-color:#526bcf #8e9fe1 #8e9fe1 #526bcf"><b>key_seq</b></div><div class="m" style="left:237px;top:175px;width:55px;height:2px;background:#6c80d6;border-color:#425cca #7e90dc #7e90dc #425cca"></div><div class="m" style="left:235px;top:180px;width:29px;height:39px;background:#7c8fdb;border-color:#526bcf #8e9fe1 #8e9fe1 #526bcf"><b>k..</b></div><div class="m" style="left:237px;top:196px;width:25px;height:21px;background:#6c80d6;border-color:#425cca #7e90dc #7e90dc #425cca"></div><div class="r" style="left:239px;top:199px;width:8px;height:5px;background:#2046c4"></div><div class="r" style="left:245px;top:199px;width:2px;height:5px;background:#000"></div><div class="m" style="left:264px;top:180px;width:30px;height:39px;background:#7c8fdb;border-color:#526bcf #8e9fe1 #8e9fe1 #526bcf"><b>kt</b></div><div class="m" style="left:266px;top:196px;width:26px;height:21px;background:#6c80d6;border-color:#425cca #7e90dc #7e90dc #425cca"></div><div class="r" style="left:268px;top:199px;width:22px;height:4px;background:#2046c4"></div><div class="m" style="left:155px;top:163px;width:78px;height:58px;background:#8d9de0;border-color:#6379d4 #9fade6 #9fade6 #6379d4"><b>kr</b></div><div class="m" style="left:157px;top:179px;width:24px;height:40px;background:#7c8fdb;border-color:#526bcf #8e9fe1 #8e9fe1 #526bcf"><b>kn</b></div><div class="m" style="left:159px;top:195px;width:20px;height:22px;background:#6c80d6;border-color:#425cca #7e90dc #7e90dc #425cca"></div><div class="t" style="left:162px;top:200px">1:</div><div class="m" style="left:181px;top:179px;width:25px;height:40px;background:#7c8fdb;border-color:#526bcf #8e9fe1 #8e9fe1 #526bcf"><b>kd</b></div><div class="m" style="left:183px;top:195px;width:21px;height:22px;background:#6c80d6;border-color:#425cca #7e90dc #7e90dc #425cca"></div><div class="r" style="left:185px;top:198px;width:17px;height:3px;background:#2046c4"></div><div class="r" style="left:185px;top:204px;width:17px;height:3px;background:#2046c4"></div><div class="r" style="left:185px;top:210px;width:17px;height:3px;background:#2046c4"></div><div class="m" style="left:206px;top:179px;width:25px;height:40px;background:#7c8fdb;border-color:#526bcf #8e9fe1 #8e9fe1 #526bcf"><b>k..</b></div><div class="m" style="left:208px;top:195px;width:21px;height:22px;background:#6c80d6;border-color:#425cca #7e90dc #7e90dc #425cca"></div><div class="t" style="left:211px;top:200px">3</div><div class="m" style="left:296px;top:101px;width:70px;height:110px;background:#8d9de0;border-color:#6379d4 #9fade6 #9fade6 #6379d4"><b>kr</b></div><div class="m" style="left:298px;top:117px;width:44px;height:27px;background:#7c8fdb;border-color:#526bcf #8e9fe1 #8e9fe1 #526bcf"><b>kn</b></div><div class="m" style="left:300px;top:133px;width:40px;height:9px;background:#6c80d6;border-color:#425cca #7e90dc #7e90dc #425cca"></div><div class="m" style="left:342px;top:117px;width:22px;height:55px;background:#7c8fdb;border-color:#526bcf #8e9fe1 #8e9fe1 #526bcf"><b>k..</b></div><div class="m" style="left:344px;top:133px;width:18px;height:37px;background:#6c80d6;border-color:#425cca #7e90dc #7e90dc #425cca"></div><div class="m" style="left:298px;top:144px;width:44px;height:28px;background:#7c8fdb;border-color:#526bcf #8e9fe1 #8e9fe1 #526bcf"><b>kd</b></div><div class="m" style="left:300px;top:160px;width:40px;height:10px;background:#6c80d6;border-color:#425cca #7e90dc #7e90dc #425cca"></div><div class="m" style="left:298px;top:172px;width:33px;height:37px;background:#7c8fdb;border-color:#526bcf #8e9fe1 #8e9fe1 #526bcf"><b>ke..</b></div><div class="m" style="left:300px;top:188px;width:29px;height:19px;background:#6c80d6;border-color:#425cca #7e90dc #7e90dc #425cca"></div><div class="t" style="left:303px;top:193px">sp.</div><div class="m" style="left:331px;top:172px;width:33px;height:37px;background:#7c8fdb;border-color:#526bcf #8e9fe1 #8e9fe1 #526bcf"><b>kt</b></div><div class="m" style="left:333px;top:188px;width:29px;height:19px;background:#6c80d6;border-color:#425cca #7e90dc #7e90dc #425cca"></div><div class="r" style="left:335px;top:191px;width:25px;height:6px;background:#2046c4"></div><div class="m" style="left:366px;top:101px;width:45px;height:110px;background:#8d9de0;border-color:#6379d4 #9fade6 #9fade6 #6379d4"><b>kr</b></div><div class="m" style="left:368px;top:117px;width:41px;height:30px;background:#7c8fdb;border-color:#526bcf #8e9fe1 #8e9fe1 #526bcf"><b>kn</b></div><div class="m" style="left:370px;top:133px;width:37px;height:12px;background:#6c80d6;border-color:#425cca #7e90dc #7e90dc #425cca"></div><div class="r" style="left:372px;top:136px;width:2px;height:4px;background:#2046c4"></div><div class="m" style="left:368px;top:147px;width:41px;height:32px;background:#7c8fdb;border-color:#526bcf #8e9fe1 #8e9fe1 #526bcf"><b>kd</b></div><div class="m" style="left:370px;top:163px;width:37px;height:14px;background:#6c80d6;border-color:#425cca #7e90dc #7e90dc #425cca"></div><div class="r" style="left:372px;top:166px;width:33px;height:4px;background:#2046c4"></div><div class="m" style="left:368px;top:179px;width:41px;height:30px;background:#7c8fdb;border-color:#526bcf #8e9fe1 #8e9fe1 #526bcf"><b>key..</b></div><div class="m" style="left:370px;top:195px;width:37px;height:12px;background:#6c80d6;border-color:#425cca #7e90dc #7e90dc #425cca"></div><div class="r" style="left:372px;top:198px;width:2px;height:4px;background:#2046c4"></div><div class="m" style="left:155px;top:222px;width:141px;height:58px;background:#8d9de0;border-color:#6379d4 #9fade6 #9fade6 #6379d4"><b>kr</b></div><div class="m" style="left:157px;top:240px;width:27px;height:38px;background:#7c8fdb;border-color:#526bcf #8e9fe1 #8e9fe1 #526bcf"><b>kn</b></div><div class="m" style="left:159px;top:256px;width:23px;height:20px;background:#6c80d6;border-color:#425cca #7e90dc #7e90dc #425cca"></div><div class="t" style="left:162px;top:261px">2:</div><div class="m" style="left:184px;top:240px;width:27px;height:38px;background:#7c8fdb;border-color:#526bcf #8e9fe1 #8e9fe1 #526bcf"><b>kd</b></div><div class="m" style="left:186px;top:256px;width:23px;height:20px;background:#6c80d6;border-color:#425cca #7e90dc #7e90dc #425cca"></div><div class="r" style="left:188px;top:259px;width:19px;height:3px;background:#2046c4"></div><div class="r" style="left:196px;top:259px;width:2px;height:3px;background:#000"></div><div class="r" style="left:201px;top:259px;width:1px;height:3px;background:#2046c4"></div><div class="r" style="left:200px;top:259px;width:2px;height:3px;background:#000"></div><div class="r" style="left:204px;top:259px;width:1px;height:3px;background:#2046c4"></div><div class="r" style="left:203px;top:259px;width:2px;height:3px;background:#000"></div><div class="r" style="left:188px;top:265px;width:19px;height:3px;background:#2046c4"></div><div class="r" style="left:194px;top:265px;width:1px;height:3px;background:#2046c4"></div><div class="r" style="left:193px;top:265px;width:2px;height:3px;background:#000"></div><div class="m" style="left:211px;top:240px;width:28px;height:38px;background:#7c8fdb;border-color:#526bcf #8e9fe1 #8e9fe1 #526bcf"><b>k..</b></div><div class="m" style="left:213px;top:256px;width:24px;height:20px;background:#6c80d6;border-color:#425cca #7e90dc #7e90dc #425cca"></div><div class="r" style="left:215px;top:259px;width:11px;height:6px;background:#2046c4"></div><div class="m" style="left:239px;top:240px;width:27px;height:38px;background:#7c8fdb;border-color:#526bcf #8e9fe1 #8e9fe1 #526bcf"><b>k..</b></div><div class="m" style="left:241px;top:256px;width:23px;height:20px;background:#6c80d6;border-color:#425cca #7e90dc #7e90dc #425cca"></div><div class="r" style="left:243px;top:259px;width:10px;height:6px;background:#2046c4"></div><div class="r" style="left:251px;top:259px;width:2px;height:6px;background:#000"></div><div class="m" style="left:266px;top:240px;width:28px;height:38px;background:#7c8fdb;border-color:#526bcf #8e9fe1 #8e9fe1 #526bcf"><b>kt</b></div><div class="m" style="left:268px;top:256px;width:24px;height:20px;background:#6c80d6;border-color:#425cca #7e90dc #7e90dc #425cca"></div><div class="r" style="left:270px;top:259px;width:20px;height:5px;background:#2046c4"></div><div class="m" style="left:296px;top:212px;width:115px;height:68px;background:#8d9de0;border-color:#6379d4 #9fade6 #9fade6 #6379d4"><b>kr</b></div><div class="m" style="left:298px;top:228px;width:43px;height:25px;background:#7c8fdb;border-color:#526bcf #8e9fe1 #8e9fe1 #526bcf"><b>kn</b></div><div class="m" style="left:300px;top:244px;width:39px;height:7px;background:#6c80d6;border-color:#425cca #7e90dc #7e90dc #425cca"></div><div class="m" style="left:298px;top:253px;width:43px;height:25px;background:#7c8fdb;border-color:#526bcf #8e9fe1 #8e9fe1 #526bcf"><b>kd</b></div><div class="m" style="left:300px;top:269px;width:39px;height:7px;background:#6c80d6;border-color:#425cca #7e90dc #7e90dc #425cca"></div><div class="m" style="left:341px;top:228px;width:22px;height:50px;background:#7c8fdb;border-color:#526bcf #8e9fe1 #8e9fe1 #526bcf"><b>k..</b></div><div class="m" style="left:343px;top:244px;width:18px;height:32px;background:#6c80d6;border-color:#425cca #7e90dc #7e90dc #425cca"></div><div class="m" style="left:363px;top:228px;width:46px;height:25px;background:#7c8fdb;border-color:#526bcf #8e9fe1 #8e9fe1 #526bcf"><b>key..</b></div><div class="m" style="left:365px;top:244px;width:42px;height:7px;background:#6c80d6;border-color:#425cca #7e90dc #7e90dc #425cca"></div><div class="m" style="left:363px;top:253px;width:46px;height:25px;background:#7c8fdb;border-color:#526bcf #8e9fe1 #8e9fe1 #526bcf"><b>kt</b></div><div class="m" style="left:365px;top:269px;width:42px;height:7px;background:#6c80d6;border-color:#425cca #7e90dc #7e90dc #425cca"></div><div class="m" style="left:155px;top:280px;width:97px;height:49px;background:#8d9de0;border-color:#6379d4 #9fade6 #9fade6 #6379d4"><b>kr</b></div><div class="m" style="left:157px;top:296px;width:30px;height:31px;background:#7c8fdb;border-color:#526bcf #8e9fe1 #8e9fe1 #526bcf"><b>kn</b></div><div class="m" style="left:159px;top:312px;width:26px;height:13px;background:#6c80d6;border-color:#425cca #7e90dc #7e90dc #425cca"></div><div class="r" style="left:161px;top:315px;width:2px;height:4px;background:#2046c4"></div><div class="m" style="left:187px;top:296px;width:32px;height:31px;background:#7c8fdb;border-color:#526bcf #8e9fe1 #8e9fe1 #526bcf"><b>kd</b></div><div class="m" style="left:189px;top:312px;width:28px;height:13px;background:#6c80d6;border-color:#425cca #7e90dc #7e90dc #425cca"></div><div class="r" style="left:191px;top:315px;width:24px;height:4px;background:#2046c4"></div><div class="m" style="left:219px;top:296px;width:31px;height:31px;background:#7c8fdb;border-color:#526bcf #8e9fe1 #8e9fe1 #526bcf"><b>ke..</b></div><div class="m" style="left:221px;top:312px;width:27px;height:13px;background:#6c80d6;border-color:#425cca #7e90dc #7e90dc #425cca"></div><div class="r" style="left:223px;top:315px;width:2px;height:4px;background:#2046c4"></div><div class="m" style="left:155px;top:329px;width:97px;height:81px;background:#8d9de0;border-color:#6379d4 #9fade6 #9fade6 #6379d4"><b>kr</b></div><div class="m" style="left:157px;top:346px;width:27px;height:40px;background:#7c8fdb;border-color:#526bcf #8e9fe1 #8e9fe1 #526bcf"><b>kn</b></div><div class="m" style="left:159px;top:362px;width:23px;height:22px;background:#6c80d6;border-color:#425cca #7e90dc #7e90dc #425cca"></div><div class="t" style="left:162px;top:367px">5</div><div class="m" style="left:184px;top:346px;width:28px;height:40px;background:#7c8fdb;border-color:#526bcf #8e9fe1 #8e9fe1 #526bcf"><b>kd</b></div><div class="m" style="left:186px;top:362px;width:24px;height:22px;background:#6c80d6;border-color:#425cca #7e90dc #7e90dc #425cca"></div><div class="r" style="left:188px;top:365px;width:20px;height:4px;background:#2046c4"></div><div class="r" style="left:188px;top:371px;width:20px;height:4px;background:#2046c4"></div><div class="m" style="left:212px;top:346px;width:38px;height:30px;background:#7c8fdb;border-color:#526bcf #8e9fe1 #8e9fe1 #526bcf"><b>key..</b></div><div class="m" style="left:214px;top:362px;width:34px;height:12px;background:#6c80d6;border-color:#425cca #7e90dc #7e90dc #425cca"></div><div class="r" style="left:216px;top:365px;width:8px;height:4px;background:#2046c4"></div><div class="r" style="left:222px;top:365px;width:2px;height:4px;background:#000"></div><div class="m" style="left:212px;top:377px;width:38px;height:31px;background:#7c8fdb;border-color:#526bcf #8e9fe1 #8e9fe1 #526bcf"><b>kt</b></div><div class="m" style="left:214px;top:393px;width:34px;height:13px;background:#6c80d6;border-color:#425cca #7e90dc #7e90dc #425cca"></div><div class="r" style="left:216px;top:396px;width:15px;height:4px;background:#2046c4"></div><div class="m" style="left:157px;top:386px;width:55px;height:22px;background:#7c8fdb;border-color:#526bcf #8e9fe1 #8e9fe1 #526bcf"><b>key_s..</b></div><div class="m" style="left:159px;top:402px;width:51px;height:4px;background:#6c80d6;border-color:#425cca #7e90dc #7e90dc #425cca"></div><div class="m" style="left:252px;top:280px;width:39px;height:130px;background:#8d9de0;border-color:#6379d4 #9fade6 #9fade6 #6379d4"><b>kr</b></div><div class="m" style="left:254px;top:296px;width:35px;height:36px;background:#7c8fdb;border-color:#526bcf #8e9fe1 #8e9fe1 #526bcf"><b>kn</b></div><div class="m" style="left:256px;top:312px;width:31px;height:18px;background:#6c80d6;border-color:#425cca #7e90dc #7e90dc #425cca"></div><div class="t" style="left:259px;top:317px">5:</div><div class="m" style="left:254px;top:333px;width:35px;height:36px;background:#7c8fdb;border-color:#526bcf #8e9fe1 #8e9fe1 #526bcf"><b>kd</b></div><div class="m" style="left:256px;top:349px;width:31px;height:18px;background:#6c80d6;border-color:#425cca #7e90dc #7e90dc #425cca"></div><div class="r" style="left:258px;top:352px;width:22px;height:4px;background:#2046c4"></div><div class="r" style="left:282px;top:352px;width:3px;height:4px;background:#2046c4"></div><div class="r" style="left:258px;top:358px;width:16px;height:4px;background:#2046c4"></div><div class="m" style="left:254px;top:370px;width:35px;height:38px;background:#7c8fdb;border-color:#526bcf #8e9fe1 #8e9fe1 #526bcf"><b>ke..</b></div><div class="m" style="left:256px;top:386px;width:31px;height:20px;background:#6c80d6;border-color:#425cca #7e90dc #7e90dc #425cca"></div><div class="t" style="left:259px;top:391px">6</div><div class="m" style="left:291px;top:280px;width:120px;height:62px;background:#8d9de0;border-color:#6379d4 #9fade6 #9fade6 #6379d4"><b>kr</b></div><div class="m" style="left:293px;top:296px;width:47px;height:23px;background:#7c8fdb;border-color:#526bcf #8e9fe1 #8e9fe1 #526bcf"><b>kn</b></div><div class="m" style="left:295px;top:312px;width:43px;height:5px;background:#6c80d6;border-color:#425cca #7e90dc #7e90dc #425cca"></div><div class="m" style="left:293px;top:319px;width:47px;height:21px;background:#7c8fdb;border-color:#526bcf #8e9fe1 #8e9fe1 #526bcf"><b>kd</b></div><div class="m" style="left:295px;top:335px;width:43px;height:3px;background:#6c80d6;border-color:#425cca #7e90dc #7e90dc #425cca"></div><div class="m" style="left:340px;top:296px;width:22px;height:44px;background:#7c8fdb;border-color:#526bcf #8e9fe1 #8e9fe1 #526bcf"><b>k..</b></div><div class="m" style="left:342px;top:312px;width:18px;height:26px;background:#6c80d6;border-color:#425cca #7e90dc #7e90dc #425cca"></div><div class="r" style="left:344px;top:315px;width:14px;height:6px;background:#2046c4"></div><div class="m" style="left:362px;top:296px;width:23px;height:44px;background:#7c8fdb;border-color:#526bcf #8e9fe1 #8e9fe1 #526bcf"><b>k..</b></div><div class="m" style="left:364px;top:312px;width:19px;height:26px;background:#6c80d6;border-color:#425cca #7e90dc #7e90dc #425cca"></div><div class="r" style="left:366px;top:315px;width:12px;height:6px;background:#2046c4"></div><div class="r" style="left:376px;top:315px;width:2px;height:6px;background:#000"></div><div class="m" style="left:385px;top:296px;width:24px;height:44px;background:#7c8fdb;border-color:#526bcf #8e9fe1 #8e9fe1 #526bcf"><b>kt</b></div><div class="m" style="left:387px;top:312px;width:20px;height:26px;background:#6c80d6;border-color:#425cca #7e90dc #7e90dc #425cca"></div><div class="r" style="left:389px;top:315px;width:16px;height:5px;background:#2046c4"></div><div class="r" style="left:389px;top:323px;width:5px;height:5px;background:#2046c4"></div><div class="m" style="left:291px;top:343px;width:120px;height:67px;background:#8d9de0;border-color:#6379d4 #9fade6 #9fade6 #6379d4"><b>kr</b></div><div class="m" style="left:293px;top:360px;width:47px;height:24px;background:#7c8fdb;border-color:#526bcf #8e9fe1 #8e9fe1 #526bcf"><b>kn</b></div><div class="m" style="left:295px;top:376px;width:43px;height:6px;background:#6c80d6;border-color:#425cca #7e90dc #7e90dc #425cca"></div><div class="m" style="left:293px;top:384px;width:47px;height:24px;background:#7c8fdb;border-color:#526bcf #8e9fe1 #8e9fe1 #526bcf"><b>kd</b></div><div class="m" style="left:295px;top:400px;width:43px;height:6px;background:#6c80d6;border-color:#425cca #7e90dc #7e90dc #425cca"></div><div class="m" style="left:340px;top:360px;width:22px;height:48px;background:#7c8fdb;border-color:#526bcf #8e9fe1 #8e9fe1 #526bcf"><b>k..</b></div><div class="m" style="left:342px;top:376px;width:18px;height:30px;background:#6c80d6;border-color:#425cca #7e90dc #7e90dc #425cca"></div><div class="m" style="left:362px;top:360px;width:47px;height:24px;background:#7c8fdb;border-color:#526bcf #8e9fe1 #8e9fe1 #526bcf"><b>key_..</b></div><div class="m" style="left:364px;top:376px;width:43px;height:6px;background:#6c80d6;border-color:#425cca #7e90dc #7e90dc #425cca"></div><div class="m" style="left:362px;top:384px;width:47px;height:24px;background:#7c8fdb;border-color:#526bcf #8e9fe1 #8e9fe1 #526bcf"><b>kt</b></div><div class="m" style="left:364px;top:400px;width:43px;height:6px;background:#6c80d6;border-color:#425cca #7e90dc #7e90dc #425cca"></div><div class="m" style="left:418px;top:48px;width:65px;height:368px;background:#bfc8ee;border-color:#95a4e2 #d1d8f4 #d1d8f4 #95a4e2"><b>taxon</b></div><div class="m" style="left:420px;top:64px;width:61px;height:350px;background:#acb8e9;border-color:#8294dd #bec8ef #bec8ef #8294dd"><b>taxon_..</b></div><div class="m" style="left:422px;top:80px;width:57px;height:23px;background:#9daae4;border-color:#7386d8 #afbaea #afbaea #7386d8"><b>seq</b></div><div class="m" style="left:424px;top:96px;width:53px;height:5px;background:#8d9de0;border-color:#6379d4 #9fade6 #9fade6 #6379d4"></div><div class="m" style="left:422px;top:104px;width:57px;height:170px;background:#9daae4;border-color:#7386d8 #afbaea #afbaea #7386d8"><b>name_..</b></div><div class="m" style="left:424px;top:120px;width:25px;height:46px;background:#8d9de0;border-color:#6379d4 #9fade6 #9fade6 #6379d4"><b>r..</b></div><div class="m" style="left:426px;top:136px;width:21px;height:28px;background:#7c8fdb;border-color:#526bcf #8e9fe1 #8e9fe1 #526bcf"></div><div class="r" style="left:428px;top:139px;width:8px;height:6px;background:#2046c4"></div><div class="r" style="left:434px;top:139px;width:2px;height:6px;background:#000"></div><div class="m" style="left:449px;top:120px;width:28px;height:46px;background:#8d9de0;border-color:#6379d4 #9fade6 #9fade6 #6379d4"><b>pa..</b></div><div class="m" style="left:451px;top:136px;width:24px;height:28px;background:#7c8fdb;border-color:#526bcf #8e9fe1 #8e9fe1 #526bcf"></div><div class="r" style="left:453px;top:139px;width:20px;height:5px;background:#2046c4"></div><div class="r" style="left:453px;top:147px;width:10px;height:5px;background:#2046c4"></div><div class="m" style="left:424px;top:166px;width:25px;height:47px;background:#8d9de0;border-color:#6379d4 #9fade6 #9fade6 #6379d4"><b>g..</b></div><div class="m" style="left:426px;top:182px;width:21px;height:29px;background:#7c8fdb;border-color:#526bcf #8e9fe1 #8e9fe1 #526bcf"></div><div class="r" style="left:428px;top:185px;width:17px;height:5px;background:#2046c4"></div><div class="r" style="left:428px;top:193px;width:10px;height:5px;background:#2046c4"></div><div class="m" style="left:449px;top:166px;width:28px;height:47px;background:#8d9de0;border-color:#6379d4 #9fade6 #9fade6 #6379d4"><b>n..</b></div><div class="m" style="left:451px;top:182px;width:24px;height:29px;background:#7c8fdb;border-color:#526bcf #8e9fe1 #8e9fe1 #526bcf"></div><div class="r" style="left:453px;top:185px;width:17px;height:6px;background:#2046c4"></div><div class="m" style="left:424px;top:213px;width:53px;height:25px;background:#8d9de0;border-color:#6379d4 #9fade6 #9fade6 #6379d4"><b>auth..</b></div><div class="m" style="left:426px;top:229px;width:49px;height:7px;background:#7c8fdb;border-color:#526bcf #8e9fe1 #8e9fe1 #526bcf"></div><div class="m" style="left:424px;top:238px;width:53px;height:34px;background:#8d9de0;border-color:#6379d4 #9fade6 #9fade6 #6379d4"><b>prot..</b></div><div class="m" style="left:426px;top:254px;width:49px;height:16px;background:#7c8fdb;border-color:#526bcf #8e9fe1 #8e9fe1 #526bcf"><b>date</b></div><div class="m" style="left:422px;top:275px;width:28px;height:49px;background:#9daae4;border-color:#7386d8 #afbaea #afbaea #7386d8"><b>d..</b></div><div class="m" style="left:424px;top:291px;width:24px;height:31px;background:#8d9de0;border-color:#6379d4 #9fade6 #9fade6 #6379d4"></div><div class="r" style="left:426px;top:294px;width:8px;height:3px;background:#2046c4"></div><div class="r" style="left:436px;top:294px;width:2px;height:3px;background:#2046c4"></div><div class="r" style="left:436px;top:294px;width:2px;height:3px;background:#000"></div><div class="r" style="left:440px;top:294px;width:6px;height:3px;background:#2046c4"></div><div class="r" style="left:444px;top:294px;width:2px;height:3px;background:#000"></div><div class="r" style="left:426px;top:300px;width:20px;height:3px;background:#2046c4"></div><div class="r" style="left:436px;top:300px;width:1px;height:3px;background:#2046c4"></div><div class="r" style="left:435px;top:300px;width:2px;height:3px;background:#000"></div><div class="r" style="left:426px;top:306px;width:20px;height:3px;background:#2046c4"></div><div class="r" style="left:432px;top:306px;width:1px;height:3px;background:#2046c4"></div><div class="r" style="left:431px;top:306px;width:2px;height:3px;background:#000"></div><div class="r" style="left:426px;top:312px;width:16px;height:3px;background:#2046c4"></div><div class="r" style="left:440px;top:312px;width:2px;height:3px;background:#000"></div><div class="m" style="left:450px;top:275px;width:29px;height:49px;background:#9daae4;border-color:#7386d8 #afbaea #afbaea #7386d8"><b>h..</b></div><div class="m" style="left:452px;top:291px;width:25px;height:31px;background:#8d9de0;border-color:#6379d4 #9fade6 #9fade6 #6379d4"></div><div class="r" style="left:454px;top:294px;width:21px;height:3px;background:#2046c4"></div><div class="r" style="left:454px;top:300px;width:21px;height:3px;background:#2046c4"></div><div class="r" style="left:454px;top:306px;width:21px;height:3px;background:#2046c4"></div><div class="r" style="left:454px;top:312px;width:21px;height:3px;background:#2046c4"></div><div class="r" style="left:473px;top:312px;width:2px;height:3px;background:#000"></div><div class="m" style="left:422px;top:324px;width:57px;height:25px;background:#9daae4;border-color:#7386d8 #afbaea #afbaea #7386d8"><b>distrib..</b></div><div class="m" style="left:424px;top:340px;width:53px;height:7px;background:#8d9de0;border-color:#6379d4 #9fade6 #9fade6 #6379d4"></div><div class="m" style="left:422px;top:349px;width:57px;height:62px;background:#9daae4;border-color:#7386d8 #afbaea #afbaea #7386d8"><b>idnotes</b></div><div class="m" style="left:424px;top:365px;width:40px;height:15px;background:#8d9de0;border-color:#6379d4 #9fade6 #9fade6 #6379d4"></div><div class="r" style="left:426px;top:368px;width:18px;height:4px;background:#2046c4"></div><div class="r" style="left:446px;top:368px;width:5px;height:4px;background:#2046c4"></div><div class="m" style="left:424px;top:379px;width:40px;height:30px;background:#8d9de0;border-color:#6379d4 #9fade6 #9fade6 #6379d4"><b>i</b></div><div class="m" style="left:426px;top:395px;width:36px;height:12px;background:#7c8fdb;border-color:#526bcf #8e9fe1 #8e9fe1 #526bcf"></div><div class="m" style="left:464px;top:365px;width:13px;height:44px;background:#8d9de0;border-color:#6379d4 #9fade6 #9fade6 #6379d4"></div><div class="r" style="left:465px;top:367px;width:11px;height:3px;background:#2046c4"></div><div class="r" style="left:465px;top:373px;width:11px;height:3px;background:#2046c4"></div><div class="r" style="left:465px;top:379px;width:11px;height:3px;background:#2046c4"></div><div class="r" style="left:465px;top:385px;width:11px;height:3px;background:#2046c4"></div><div class="r" style="left:465px;top:391px;width:11px;height:3px;background:#2046c4"></div><div class="r" style="left:474px;top:391px;width:2px;height:3px;background:#000"></div><div class="m" style="left:484px;top:48px;width:195px;height:136px;background:#bfc8ee;border-color:#95a4e2 #d1d8f4 #d1d8f4 #95a4e2"><b>taxon</b></div><div class="m" style="left:486px;top:64px;width:191px;height:117px;background:#acb8e9;border-color:#8294dd #bec8ef #bec8ef #8294dd"><b>taxon_description</b></div><div class="m" style="left:488px;top:80px;width:99px;height:12px;background:#9daae4;border-color:#7386d8 #afbaea #afbaea #7386d8"></div><div class="m" style="left:488px;top:92px;width:99px;height:87px;background:#9daae4;border-color:#7386d8 #afbaea #afbaea #7386d8"><b>name_info</b></div><div class="m" style="left:490px;top:107px;width:29px;height:36px;background:#8d9de0;border-color:#6379d4 #9fade6 #9fade6 #6379d4"><b>ra..</b></div><div class="m" style="left:492px;top:123px;width:25px;height:18px;background:#7c8fdb;border-color:#526bcf #8e9fe1 #8e9fe1 #526bcf"></div><div class="r" style="left:494px;top:126px;width:9px;height:6px;background:#2046c4"></div><div class="r" style="left:501px;top:126px;width:2px;height:6px;background:#000"></div><div class="m" style="left:519px;top:107px;width:30px;height:36px;background:#8d9de0;border-color:#6379d4 #9fade6 #9fade6 #6379d4"><b>pa..</b></div><div class="m" style="left:521px;top:123px;width:26px;height:18px;background:#7c8fdb;border-color:#526bcf #8e9fe1 #8e9fe1 #526bcf"></div><div class="r" style="left:523px;top:126px;width:22px;height:4px;background:#2046c4"></div><div class="r" style="left:523px;top:132px;width:22px;height:4px;background:#2046c4"></div><div class="m" style="left:549px;top:107px;width:36px;height:30px;background:#8d9de0;border-color:#6379d4 #9fade6 #9fade6 #6379d4"><b>aut..</b></div><div class="m" style="left:551px;top:123px;width:32px;height:12px;background:#7c8fdb;border-color:#526bcf #8e9fe1 #8e9fe1 #526bcf"></div><div class="m" style="left:549px;top:137px;width:36px;height:40px;background:#8d9de0;border-color:#6379d4 #9fade6 #9fade6 #6379d4"><b>pro..</b></div><div class="m" style="left:551px;top:152px;width:32px;height:24px;background:#7c8fdb;border-color:#526bcf #8e9fe1 #8e9fe1 #526bcf"><b>da..</b></div><div class="m" style="left:553px;top:167px;width:28px;height:7px;background:#6c80d6;border-color:#425cca #7e90dc #7e90dc #425cca"></div><div class="m" style="left:490px;top:143px;width:29px;height:34px;background:#8d9de0;border-color:#6379d4 #9fade6 #9fade6 #6379d4"><b>g..</b></div><div class="m" style="left:492px;top:159px;width:25px;height:16px;background:#7c8fdb;border-color:#526bcf #8e9fe1 #8e9fe1 #526bcf"></div><div class="r" style="left:494px;top:162px;width:21px;height:4px;background:#2046c4"></div><div class="r" style="left:494px;top:168px;width:21px;height:4px;background:#2046c4"></div><div class="m" style="left:519px;top:143px;width:30px;height:34px;background:#8d9de0;border-color:#6379d4 #9fade6 #9fade6 #6379d4"><b>n..</b></div><div class="m" style="left:521px;top:159px;width:26px;height:16px;background:#7c8fdb;border-color:#526bcf #8e9fe1 #8e9fe1 #526bcf"></div><div class="r" style="left:523px;top:162px;width:19px;height:6px;background:#2046c4"></div><div class="m" style="left:588px;top:80px;width:25px;height:49px;background:#9daae4;border-color:#7386d8 #afbaea #afbaea #7386d8"><b>d..</b></div><div class="m" style="left:590px;top:96px;width:21px;height:31px;background:#8d9de0;border-color:#6379d4 #9fade6 #9fade6 #6379d4"></div><div class="r" style="left:592px;top:99px;width:3px;height:4px;background:#2046c4"></div><div class="r" style="left:596px;top:99px;width:2px;height:4px;background:#2046c4"></div><div class="r" style="left:596px;top:99px;width:2px;height:4px;background:#000"></div><div class="r" style="left:600px;top:99px;width:1px;height:4px;background:#2046c4"></div><div class="r" style="left:599px;top:99px;width:2px;height:4px;background:#000"></div><div class="r" style="left:602px;top:99px;width:7px;height:4px;background:#2046c4"></div><div class="r" style="left:592px;top:105px;width:17px;height:4px;background:#2046c4"></div><div class="r" style="left:607px;top:105px;width:2px;height:4px;background:#000"></div><div class="r" style="left:592px;top:111px;width:8px;height:4px;background:#2046c4"></div><div class="r" style="left:601px;top:111px;width:2px;height:4px;background:#2046c4"></div><div class="r" style="left:601px;top:111px;width:2px;height:4px;background:#000"></div><div class="r" style="left:604px;top:111px;width:5px;height:4px;background:#2046c4"></div><div class="r" style="left:607px;top:111px;width:2px;height:4px;background:#000"></div><div class="r" style="left:592px;top:117px;width:14px;height:4px;background:#2046c4"></div><div class="r" style="left:604px;top:117px;width:2px;height:4px;background:#000"></div><div class="m" style="left:613px;top:80px;width:64px;height:49px;background:#9daae4;border-color:#7386d8 #afbaea #afbaea #7386d8"><b>habitat</b></div><div class="m" style="left:615px;top:96px;width:15px;height:31px;background:#8d9de0;border-color:#6379d4 #9fade6 #9fade6 #6379d4"></div><div class="r" style="left:616px;top:98px;width:13px;height:3px;background:#2046c4"></div><div class="r" style="left:616px;top:104px;width:13px;height:3px;background:#2046c4"></div><div class="r" style="left:616px;top:110px;width:13px;height:3px;background:#2046c4"></div><div class="r" style="left:616px;top:116px;width:5px;height:3px;background:#2046c4"></div><div class="m" style="left:629px;top:96px;width:30px;height:31px;background:#8d9de0;border-color:#6379d4 #9fade6 #9fade6 #6379d4"><b>i</b></div><div class="m" style="left:631px;top:111px;width:26px;height:14px;background:#7c8fdb;border-color:#526bcf #8e9fe1 #8e9fe1 #526bcf"></div><div class="r" style="left:633px;top:114px;width:12px;height:4px;background:#2046c4"></div><div class="m" style="left:658px;top:96px;width:17px;height:31px;background:#8d9de0;border-color:#6379d4 #9fade6 #9fade6 #6379d4"></div><div class="r" style="left:661px;top:104px;width:13px;height:3px;background:#2046c4"></div><div class="r" style="left:672px;top:104px;width:2px;height:3px;background:#000"></div><div class="m" style="left:588px;top:129px;width:25px;height:50px;background:#9daae4;border-color:#7386d8 #afbaea #afbaea #7386d8"><b>d..</b></div><div class="m" style="left:590px;top:145px;width:21px;height:32px;background:#8d9de0;border-color:#6379d4 #9fade6 #9fade6 #6379d4"></div><div class="r" style="left:592px;top:148px;width:2px;height:4px;background:#2046c4"></div><div class="r" style="left:592px;top:148px;width:2px;height:4px;background:#000"></div><div class="r" style="left:595px;top:148px;width:14px;height:4px;background:#2046c4"></div><div class="r" style="left:592px;top:154px;width:5px;height:4px;background:#2046c4"></div><div class="r" style="left:599px;top:154px;width:1px;height:4px;background:#2046c4"></div><div class="r" style="left:598px;top:154px;width:2px;height:4px;background:#000"></div><div class="r" style="left:601px;top:154px;width:8px;height:4px;background:#2046c4"></div><div class="r" style="left:592px;top:160px;width:17px;height:4px;background:#2046c4"></div><div class="r" style="left:592px;top:166px;width:8px;height:4px;background:#2046c4"></div><div class="r" style="left:601px;top:166px;width:3px;height:4px;background:#2046c4"></div><div class="r" style="left:602px;top:166px;width:2px;height:4px;background:#000"></div><div class="r" style="left:605px;top:166px;width:1px;height:4px;background:#2046c4"></div><div class="r" style="left:604px;top:166px;width:2px;height:4px;background:#000"></div><div class="m" style="left:613px;top:129px;width:64px;height:50px;background:#9daae4;border-color:#7386d8 #afbaea #afbaea #7386d8"><b>idnotes</b></div><div class="m" style="left:615px;top:145px;width:15px;height:32px;background:#8d9de0;border-color:#6379d4 #9fade6 #9fade6 #6379d4"></div><div class="r" style="left:616px;top:147px;width:13px;height:4px;background:#2046c4"></div><div class="r" style="left:616px;top:154px;width:13px;height:4px;background:#2046c4"></div><div class="r" style="left:616px;top:161px;width:5px;height:4px;background:#2046c4"></div><div class="m" style="left:629px;top:145px;width:30px;height:32px;background:#8d9de0;border-color:#6379d4 #9fade6 #9fade6 #6379d4"><b>i</b></div><div class="m" style="left:631px;top:161px;width:26px;height:14px;background:#7c8fdb;border-color:#526bcf #8e9fe1 #8e9fe1 #526bcf"></div><div class="r" style="left:633px;top:164px;width:2px;height:3px;background:#2046c4"></div><div class="r" style="left:633px;top:164px;width:2px;height:3px;background:#000"></div><div class="r" style="left:636px;top:164px;width:19px;height:3px;background:#2046c4"></div><div class="m" style="left:658px;top:145px;width:17px;height:32px;background:#8d9de0;border-color:#6379d4 #9fade6 #9fade6 #6379d4"></div><div class="r" style="left:659px;top:147px;width:15px;height:3px;background:#2046c4"></div><div class="r" style="left:659px;top:153px;width:15px;height:3px;background:#2046c4"></div><div class="r" style="left:659px;top:159px;width:15px;height:3px;background:#2046c4"></div><div class="r" style="left:659px;top:165px;width:9px;height:3px;background:#2046c4"></div><div class="r" style="left:666px;top:165px;width:2px;height:3px;background:#000"></div><div class="m" style="left:484px;top:184px;width:195px;height:141px;background:#bfc8ee;border-color:#95a4e2 #d1d8f4 #d1d8f4 #95a4e2"><b>taxon</b></div><div class="m" style="left:486px;top:200px;width:191px;height:122px;background:#acb8e9;border-color:#8294dd #bec8ef #bec8ef #8294dd"><b>taxon_description</b></div><div class="m" style="left:488px;top:216px;width:95px;height:12px;background:#9daae4;border-color:#7386d8 #afbaea #afbaea #7386d8"></div><div class="m" style="left:488px;top:228px;width:95px;height:92px;background:#9daae4;border-color:#7386d8 #afbaea #afbaea #7386d8"><b>name_info</b></div><div class="m" style="left:490px;top:243px;width:28px;height:39px;background:#8d9de0;border-color:#6379d4 #9fade6 #9fade6 #6379d4"><b>ra..</b></div><div class="m" style="left:492px;top:259px;width:24px;height:21px;background:#7c8fdb;border-color:#526bcf #8e9fe1 #8e9fe1 #526bcf"></div><div class="r" style="left:494px;top:262px;width:9px;height:6px;background:#2046c4"></div><div class="r" style="left:501px;top:262px;width:2px;height:6px;background:#000"></div><div class="m" style="left:518px;top:243px;width:29px;height:39px;background:#8d9de0;border-color:#6379d4 #9fade6 #9fade6 #6379d4"><b>pa..</b></div><div class="m" style="left:520px;top:259px;width:25px;height:21px;background:#7c8fdb;border-color:#526bcf #8e9fe1 #8e9fe1 #526bcf"></div><div class="r" style="left:522px;top:262px;width:21px;height:4px;background:#2046c4"></div><div class="r" style="left:522px;top:268px;width:21px;height:4px;background:#2046c4"></div><div class="m" style="left:547px;top:243px;width:34px;height:33px;background:#8d9de0;border-color:#6379d4 #9fade6 #9fade6 #6379d4"><b>aut..</b></div><div class="m" style="left:549px;top:259px;width:30px;height:15px;background:#7c8fdb;border-color:#526bcf #8e9fe1 #8e9fe1 #526bcf"></div><div class="m" style="left:547px;top:276px;width:34px;height:43px;background:#8d9de0;border-color:#6379d4 #9fade6 #9fade6 #6379d4"><b>pro..</b></div><div class="m" style="left:549px;top:291px;width:31px;height:27px;background:#7c8fdb;border-color:#526bcf #8e9fe1 #8e9fe1 #526bcf"><b>da..</b></div><div class="m" style="left:551px;top:307px;width:27px;height:9px;background:#6c80d6;border-color:#425cca #7e90dc #7e90dc #425cca"></div><div class="m" style="left:490px;top:282px;width:28px;height:37px;background:#8d9de0;border-color:#6379d4 #9fade6 #9fade6 #6379d4"><b>g..</b></div><div class="m" style="left:492px;top:298px;width:24px;height:19px;background:#7c8fdb;border-color:#526bcf #8e9fe1 #8e9fe1 #526bcf"></div><div class="r" style="left:494px;top:301px;width:20px;height:4px;background:#2046c4"></div><div class="r" style="left:494px;top:307px;width:20px;height:4px;background:#2046c4"></div><div class="m" style="left:518px;top:282px;width:29px;height:37px;background:#8d9de0;border-color:#6379d4 #9fade6 #9fade6 #6379d4"><b>n..</b></div><div class="m" style="left:520px;top:298px;width:25px;height:19px;background:#7c8fdb;border-color:#526bcf #8e9fe1 #8e9fe1 #526bcf"></div><div class="r" style="left:522px;top:301px;width:19px;height:5px;background:#2046c4"></div><div class="m" style="left:584px;top:216px;width:21px;height:62px;background:#9daae4;border-color:#7386d8 #afbaea #afbaea #7386d8"><b>d..</b></div><div class="m" style="left:586px;top:232px;width:17px;height:44px;background:#8d9de0;border-color:#6379d4 #9fade6 #9fade6 #6379d4"></div><div class="r" style="left:587px;top:234px;width:3px;height:3px;background:#2046c4"></div><div class="r" style="left:591px;top:234px;width:4px;height:3px;background:#2046c4"></div><div class="r" style="left:593px;top:234px;width:2px;height:3px;background:#000"></div><div class="r" style="left:596px;top:234px;width:3px;height:3px;background:#2046c4"></div><div class="r" style="left:597px;top:234px;width:2px;height:3px;background:#000"></div><div class="r" style="left:600px;top:234px;width:2px;height:3px;background:#2046c4"></div><div class="r" style="left:587px;top:240px;width:15px;height:3px;background:#2046c4"></div><div class="r" style="left:587px;top:246px;width:15px;height:3px;background:#2046c4"></div><div class="r" style="left:589px;top:246px;width:1px;height:3px;background:#2046c4"></div><div class="r" style="left:588px;top:246px;width:2px;height:3px;background:#000"></div><div class="r" style="left:587px;top:252px;width:15px;height:3px;background:#2046c4"></div><div class="r" style="left:599px;top:252px;width:2px;height:3px;background:#2046c4"></div><div class="r" style="left:599px;top:252px;width:2px;height:3px;background:#000"></div><div class="r" style="left:587px;top:258px;width:15px;height:3px;background:#2046c4"></div><div class="r" style="left:590px;top:258px;width:1px;height:3px;background:#2046c4"></div><div class="r" style="left:589px;top:258px;width:2px;height:3px;background:#000"></div><div class="r" style="left:587px;top:264px;width:4px;height:3px;background:#2046c4"></div><div class="r" style="left:589px;top:264px;width:2px;height:3px;background:#000"></div><div class="m" style="left:605px;top:216px;width:50px;height:62px;background:#9daae4;border-color:#7386d8 #afbaea #afbaea #7386d8"><b>habit..</b></div><div class="m" style="left:607px;top:232px;width:35px;height:15px;background:#8d9de0;border-color:#6379d4 #9fade6 #9fade6 #6379d4"></div><div class="r" style="left:609px;top:235px;width:31px;height:3px;background:#2046c4"></div><div class="m" style="left:607px;top:246px;width:35px;height:31px;background:#8d9de0;border-color:#6379d4 #9fade6 #9fade6 #6379d4"><b>i</b></div><div class="m" style="left:609px;top:262px;width:31px;height:13px;background:#7c8fdb;border-color:#526bcf #8e9fe1 #8e9fe1 #526bcf"></div><div class="m" style="left:641px;top:232px;width:13px;height:45px;background:#8d9de0;border-color:#6379d4 #9fade6 #9fade6 #6379d4"></div><div class="m" style="left:655px;top:216px;width:22px;height:62px;background:#9daae4;border-color:#7386d8 #afbaea #afbaea #7386d8"><b>d..</b></div><div class="m" style="left:657px;top:232px;width:18px;height:44px;background:#8d9de0;border-color:#6379d4 #9fade6 #9fade6 #6379d4"></div><div class="r" style="left:658px;top:234px;width:1px;height:3px;background:#2046c4"></div><div class="r" style="left:658px;top:234px;width:2px;height:3px;background:#000"></div><div class="r" style="left:660px;top:234px;width:14px;height:3px;background:#2046c4"></div><div class="r" style="left:660px;top:240px;width:14px;height:3px;background:#2046c4"></div><div class="r" style="left:660px;top:240px;width:2px;height:3px;background:#2046c4"></div><div class="r" style="left:660px;top:240px;width:2px;height:3px;background:#000"></div><div class="r" style="left:671px;top:240px;width:1px;height:3px;background:#2046c4"></div><div class="r" style="left:670px;top:240px;width:2px;height:3px;background:#000"></div><div class="r" style="left:660px;top:246px;width:14px;height:3px;background:#2046c4"></div><div class="r" style="left:666px;top:246px;width:2px;height:3px;background:#2046c4"></div><div class="r" style="left:666px;top:246px;width:2px;height:3px;background:#000"></div><div class="r" style="left:671px;top:246px;width:1px;height:3px;background:#2046c4"></div><div class="r" style="left:670px;top:246px;width:2px;height:3px;background:#000"></div><div class="r" style="left:660px;top:252px;width:14px;height:3px;background:#2046c4"></div><div class="r" style="left:663px;top:252px;width:1px;height:3px;background:#2046c4"></div><div class="r" style="left:662px;top:252px;width:2px;height:3px;background:#000"></div><div class="r" style="left:671px;top:252px;width:1px;height:3px;background:#2046c4"></div><div class="r" style="left:670px;top:252px;width:2px;height:3px;background:#000"></div><div class="r" style="left:658px;top:258px;width:16px;height:3px;background:#2046c4"></div><div class="r" style="left:658px;top:264px;width:1px;height:3px;background:#2046c4"></div><div class="r" style="left:658px;top:264px;width:2px;height:3px;background:#000"></div><div class="m" style="left:585px;top:279px;width:60px;height:41px;background:#9daae4;border-color:#7386d8 #afbaea #afbaea #7386d8"><b>idnotes</b></div><div class="m" style="left:587px;top:295px;width:38px;height:24px;background:#8d9de0;border-color:#6379d4 #9fade6 #9fade6 #6379d4"><b>i</b></div><div class="m" style="left:589px;top:311px;width:34px;height:7px;background:#7c8fdb;border-color:#526bcf #8e9fe1 #8e9fe1 #526bcf"></div><div class="m" style="left:624px;top:295px;width:20px;height:24px;background:#8d9de0;border-color:#6379d4 #9fade6 #9fade6 #6379d4"></div><div class="r" style="left:630px;top:297px;width:2px;height:3px;background:#2046c4"></div><div class="r" style="left:630px;top:297px;width:2px;height:3px;background:#000"></div><div class="r" style="left:632px;top:297px;width:11px;height:3px;background:#2046c4"></div><div class="r" style="left:625px;top:303px;width:18px;height:3px;background:#2046c4"></div><div class="r" style="left:625px;top:309px;width:16px;height:3px;background:#2046c4"></div><div class="r" style="left:639px;top:309px;width:2px;height:3px;background:#000"></div><div class="m" style="left:645px;top:279px;width:32px;height:41px;background:#9daae4;border-color:#7386d8 #afbaea #afbaea #7386d8"><b>ill..</b></div><div class="m" style="left:647px;top:295px;width:28px;height:23px;background:#8d9de0;border-color:#6379d4 #9fade6 #9fade6 #6379d4"></div><div class="r" style="left:649px;top:298px;width:8px;height:4px;background:#2046c4"></div><div class="r" style="left:660px;top:298px;width:5px;height:4px;background:#2046c4"></div><div class="r" style="left:667px;top:298px;width:6px;height:4px;background:#2046c4"></div><div class="r" style="left:671px;top:298px;width:2px;height:4px;background:#000"></div><div class="r" style="left:649px;top:304px;width:8px;height:4px;background:#2046c4"></div><div class="r" style="left:661px;top:304px;width:5px;height:4px;background:#2046c4"></div><div class="r" style="left:664px;top:304px;width:2px;height:4px;background:#000"></div><div class="r" style="left:649px;top:310px;width:7px;height:4px;background:#2046c4"></div><div class="r" style="left:654px;top:310px;width:2px;height:4px;background:#000"></div><div class="m" style="left:484px;top:326px;width:299px;height:90px;background:#bfc8ee;border-color:#95a4e2 #d1d8f4 #d1d8f4 #95a4e2"><b>taxon</b></div><div class="m" style="left:486px;top:342px;width:295px;height:72px;background:#acb8e9;border-color:#8294dd #bec8ef #bec8ef #8294dd"><b>taxon_description</b></div><div class="m" style="left:488px;top:358px;width:19px;height:53px;background:#9daae4;border-color:#7386d8 #afbaea #afbaea #7386d8"><b>s..</b></div><div class="m" style="left:490px;top:374px;width:15px;height:35px;background:#8d9de0;border-color:#6379d4 #9fade6 #9fade6 #6379d4"></div><div class="m" style="left:507px;top:358px;width:136px;height:53px;background:#9daae4;border-color:#7386d8 #afbaea #afbaea #7386d8"><b>name_info</b></div><div class="m" style="left:509px;top:373px;width:20px;height:36px;background:#8d9de0;border-color:#6379d4 #9fade6 #9fade6 #6379d4"><b>r..</b></div><div class="m" style="left:511px;top:389px;width:16px;height:18px;background:#7c8fdb;border-color:#526bcf #8e9fe1 #8e9fe1 #526bcf"></div><div class="r" style="left:513px;top:392px;width:8px;height:6px;background:#2046c4"></div><div class="r" style="left:519px;top:392px;width:2px;height:6px;background:#000"></div><div class="m" style="left:529px;top:373px;width:20px;height:36px;background:#8d9de0;border-color:#6379d4 #9fade6 #9fade6 #6379d4"><b>p..</b></div><div class="m" style="left:531px;top:389px;width:16px;height:18px;background:#7c8fdb;border-color:#526bcf #8e9fe1 #8e9fe1 #526bcf"></div><div class="r" style="left:533px;top:392px;width:12px;height:3px;background:#2046c4"></div><div class="r" style="left:533px;top:398px;width:12px;height:3px;background:#2046c4"></div><div class="m" style="left:549px;top:373px;width:20px;height:36px;background:#8d9de0;border-color:#6379d4 #9fade6 #9fade6 #6379d4"><b>g..</b></div><div class="m" style="left:551px;top:389px;width:16px;height:18px;background:#7c8fdb;border-color:#526bcf #8e9fe1 #8e9fe1 #526bcf"></div><div class="r" style="left:553px;top:392px;width:12px;height:3px;background:#2046c4"></div><div class="r" style="left:553px;top:398px;width:12px;height:3px;background:#2046c4"></div><div class="m" style="left:569px;top:373px;width:20px;height:36px;background:#8d9de0;border-color:#6379d4 #9fade6 #9fade6 #6379d4"><b>n..</b></div><div class="m" style="left:571px;top:389px;width:16px;height:18px;background:#7c8fdb;border-color:#526bcf #8e9fe1 #8e9fe1 #526bcf"></div><div class="r" style="left:573px;top:392px;width:12px;height:3px;background:#2046c4"></div><div class="r" style="left:573px;top:398px;width:12px;height:3px;background:#2046c4"></div><div class="m" style="left:589px;top:373px;width:20px;height:36px;background:#8d9de0;border-color:#6379d4 #9fade6 #9fade6 #6379d4"><b>a..</b></div><div class="m" style="left:591px;top:389px;width:16px;height:18px;background:#7c8fdb;border-color:#526bcf #8e9fe1 #8e9fe1 #526bcf"></div><div class="r" style="left:593px;top:392px;width:12px;height:3px;background:#2046c4"></div><div class="r" style="left:593px;top:398px;width:12px;height:3px;background:#2046c4"></div><div class="m" style="left:609px;top:373px;width:32px;height:36px;background:#8d9de0;border-color:#6379d4 #9fade6 #9fade6 #6379d4"><b>pr..</b></div><div class="m" style="left:611px;top:389px;width:28px;height:18px;background:#7c8fdb;border-color:#526bcf #8e9fe1 #8e9fe1 #526bcf"><b>d..</b></div><div class="m" style="left:643px;top:358px;width:19px;height:53px;background:#9daae4;border-color:#7386d8 #afbaea #afbaea #7386d8"><b>d..</b></div><div class="m" style="left:645px;top:374px;width:15px;height:35px;background:#8d9de0;border-color:#6379d4 #9fade6 #9fade6 #6379d4"></div><div class="r" style="left:646px;top:376px;width:4px;height:4px;background:#2046c4"></div><div class="r" style="left:651px;top:376px;width:1px;height:4px;background:#2046c4"></div><div class="r" style="left:650px;top:376px;width:2px;height:4px;background:#000"></div><div class="r" style="left:653px;top:376px;width:2px;height:4px;background:#2046c4"></div><div class="r" style="left:653px;top:376px;width:2px;height:4px;background:#000"></div><div class="r" style="left:646px;top:382px;width:13px;height:4px;background:#2046c4"></div><div class="r" style="left:646px;top:388px;width:13px;height:4px;background:#2046c4"></div><div class="r" style="left:655px;top:388px;width:1px;height:4px;background:#2046c4"></div><div class="r" style="left:654px;top:388px;width:2px;height:4px;background:#000"></div><div class="r" style="left:646px;top:394px;width:3px;height:4px;background:#2046c4"></div><div class="r" style="left:647px;top:394px;width:2px;height:4px;background:#000"></div><div class="r" style="left:649px;top:394px;width:10px;height:4px;background:#2046c4"></div><div class="m" style="left:662px;top:358px;width:49px;height:53px;background:#9daae4;border-color:#7386d8 #afbaea #afbaea #7386d8"><b>habit..</b></div><div class="m" style="left:664px;top:374px;width:33px;height:13px;background:#8d9de0;border-color:#6379d4 #9fade6 #9fade6 #6379d4"></div><div class="m" style="left:664px;top:386px;width:33px;height:23px;background:#8d9de0;border-color:#6379d4 #9fade6 #9fade6 #6379d4"><b>i</b></div><div class="m" style="left:666px;top:402px;width:29px;height:5px;background:#7c8fdb;border-color:#526bcf #8e9fe1 #8e9fe1 #526bcf"></div><div class="m" style="left:697px;top:374px;width:12px;height:35px;background:#8d9de0;border-color:#6379d4 #9fade6 #9fade6 #6379d4"></div><div class="r" style="left:698px;top:376px;width:10px;height:3px;background:#2046c4"></div><div class="r" style="left:698px;top:382px;width:10px;height:3px;background:#2046c4"></div><div class="r" style="left:698px;top:388px;width:10px;height:3px;background:#2046c4"></div><div class="r" style="left:698px;top:394px;width:8px;height:3px;background:#2046c4"></div><div class="r" style="left:704px;top:394px;width:2px;height:3px;background:#000"></div><div class="m" style="left:711px;top:358px;width:19px;height:53px;background:#9daae4;border-color:#7386d8 #afbaea #afbaea #7386d8"><b>d..</b></div><div class="m" style="left:713px;top:374px;width:15px;height:35px;background:#8d9de0;border-color:#6379d4 #9fade6 #9fade6 #6379d4"></div><div class="r" style="left:714px;top:376px;width:1px;height:4px;background:#2046c4"></div><div class="r" style="left:714px;top:376px;width:2px;height:4px;background:#000"></div><div class="r" style="left:717px;top:376px;width:3px;height:4px;background:#2046c4"></div><div class="r" style="left:721px;top:376px;width:2px;height:4px;background:#2046c4"></div><div class="r" style="left:721px;top:376px;width:2px;height:4px;background:#000"></div><div class="r" style="left:714px;top:382px;width:13px;height:4px;background:#2046c4"></div><div class="r" style="left:714px;top:388px;width:13px;height:4px;background:#2046c4"></div><div class="r" style="left:714px;top:394px;width:5px;height:4px;background:#2046c4"></div><div class="r" style="left:720px;top:394px;width:2px;height:4px;background:#2046c4"></div><div class="r" style="left:720px;top:394px;width:2px;height:4px;background:#000"></div><div class="r" style="left:723px;top:394px;width:4px;height:4px;background:#2046c4"></div><div class="m" style="left:730px;top:358px;width:50px;height:53px;background:#9daae4;border-color:#7386d8 #afbaea #afbaea #7386d8"><b>idnot..</b></div><div class="m" style="left:732px;top:374px;width:33px;height:13px;background:#8d9de0;border-color:#6379d4 #9fade6 #9fade6 #6379d4"></div><div class="m" style="left:732px;top:386px;width:33px;height:23px;background:#8d9de0;border-color:#6379d4 #9fade6 #9fade6 #6379d4"><b>i</b></div><div class="m" style="left:734px;top:402px;width:29px;height:5px;background:#7c8fdb;border-color:#526bcf #8e9fe1 #8e9fe1 #526bcf"></div><div class="m" style="left:765px;top:374px;width:13px;height:35px;background:#8d9de0;border-color:#6379d4 #9fade6 #9fade6 #6379d4"></div><div class="r" style="left:766px;top:376px;width:11px;height:3px;background:#2046c4"></div><div class="r" style="left:766px;top:382px;width:11px;height:3px;background:#2046c4"></div><div class="r" style="left:766px;top:388px;width:11px;height:3px;background:#2046c4"></div><div class="r" style="left:766px;top:394px;width:8px;height:3px;background:#2046c4"></div><div class="r" style="left:772px;top:394px;width:2px;height:3px;background:#000"></div><div class="m" style="left:680px;top:48px;width:103px;height:277px;background:#bfc8ee;border-color:#95a4e2 #d1d8f4 #d1d8f4 #95a4e2"><b>taxon</b></div><div class="m" style="left:682px;top:64px;width:99px;height:259px;background:#acb8e9;border-color:#8294dd #bec8ef #bec8ef #8294dd"><b>taxon_descri..</b></div><div class="m" style="left:684px;top:80px;width:95px;height:15px;background:#9daae4;border-color:#7386d8 #afbaea #afbaea #7386d8"><b>seq</b></div><div class="m" style="left:684px;top:95px;width:95px;height:106px;background:#9daae4;border-color:#7386d8 #afbaea #afbaea #7386d8"><b>name_info</b></div><div class="m" style="left:686px;top:111px;width:28px;height:43px;background:#8d9de0;border-color:#6379d4 #9fade6 #9fade6 #6379d4"><b>ra..</b></div><div class="m" style="left:688px;top:127px;width:24px;height:25px;background:#7c8fdb;border-color:#526bcf #8e9fe1 #8e9fe1 #526bcf"></div><div class="r" style="left:690px;top:130px;width:9px;height:6px;background:#2046c4"></div><div class="r" style="left:697px;top:130px;width:2px;height:6px;background:#000"></div><div class="m" style="left:714px;top:111px;width:28px;height:43px;background:#8d9de0;border-color:#6379d4 #9fade6 #9fade6 #6379d4"><b>pa..</b></div><div class="m" style="left:716px;top:127px;width:24px;height:25px;background:#7c8fdb;border-color:#526bcf #8e9fe1 #8e9fe1 #526bcf"></div><div class="r" style="left:718px;top:130px;width:20px;height:4px;background:#2046c4"></div><div class="r" style="left:718px;top:136px;width:10px;height:4px;background:#2046c4"></div><div class="m" style="left:742px;top:111px;width:35px;height:34px;background:#8d9de0;border-color:#6379d4 #9fade6 #9fade6 #6379d4"><b>au..</b></div><div class="m" style="left:744px;top:127px;width:31px;height:16px;background:#7c8fdb;border-color:#526bcf #8e9fe1 #8e9fe1 #526bcf"></div><div class="r" style="left:746px;top:130px;width:9px;height:3px;background:#2046c4"></div><div class="r" style="left:757px;top:130px;width:16px;height:3px;background:#2046c4"></div><div class="m" style="left:742px;top:145px;width:35px;height:54px;background:#8d9de0;border-color:#6379d4 #9fade6 #9fade6 #6379d4"><b>pro..</b></div><div class="m" style="left:744px;top:161px;width:31px;height:37px;background:#7c8fdb;border-color:#526bcf #8e9fe1 #8e9fe1 #526bcf"><b>da..</b></div><div class="m" style="left:746px;top:177px;width:27px;height:19px;background:#6c80d6;border-color:#425cca #7e90dc #7e90dc #425cca"></div><div class="r" style="left:748px;top:180px;width:10px;height:5px;background:#2046c4"></div><div class="r" style="left:760px;top:180px;width:11px;height:5px;background:#2046c4"></div><div class="m" style="left:686px;top:155px;width:28px;height:44px;background:#8d9de0;border-color:#6379d4 #9fade6 #9fade6 #6379d4"><b>g..</b></div><div class="m" style="left:688px;top:171px;width:24px;height:26px;background:#7c8fdb;border-color:#526bcf #8e9fe1 #8e9fe1 #526bcf"></div><div class="r" style="left:690px;top:174px;width:20px;height:4px;background:#2046c4"></div><div class="r" style="left:690px;top:180px;width:10px;height:4px;background:#2046c4"></div><div class="m" style="left:714px;top:155px;width:28px;height:44px;background:#8d9de0;border-color:#6379d4 #9fade6 #9fade6 #6379d4"><b>n..</b></div><div class="m" style="left:716px;top:171px;width:24px;height:26px;background:#7c8fdb;border-color:#526bcf #8e9fe1 #8e9fe1 #526bcf"></div><div class="r" style="left:718px;top:174px;width:20px;height:4px;background:#2046c4"></div><div class="m" style="left:684px;top:201px;width:19px;height:68px;background:#9daae4;border-color:#7386d8 #afbaea #afbaea #7386d8"><b>d..</b></div><div class="m" style="left:686px;top:217px;width:15px;height:50px;background:#8d9de0;border-color:#6379d4 #9fade6 #9fade6 #6379d4"></div><div class="r" style="left:687px;top:219px;width:4px;height:3px;background:#2046c4"></div><div class="r" style="left:692px;top:219px;width:1px;height:3px;background:#2046c4"></div><div class="r" style="left:691px;top:219px;width:2px;height:3px;background:#000"></div><div class="r" style="left:694px;top:219px;width:2px;height:3px;background:#2046c4"></div><div class="r" style="left:694px;top:219px;width:2px;height:3px;background:#000"></div><div class="r" style="left:697px;top:219px;width:3px;height:3px;background:#2046c4"></div><div class="r" style="left:687px;top:225px;width:13px;height:3px;background:#2046c4"></div><div class="r" style="left:687px;top:231px;width:13px;height:3px;background:#2046c4"></div><div class="r" style="left:687px;top:237px;width:13px;height:3px;background:#2046c4"></div><div class="r" style="left:693px;top:237px;width:2px;height:3px;background:#2046c4"></div><div class="r" style="left:693px;top:237px;width:2px;height:3px;background:#000"></div><div class="r" style="left:687px;top:243px;width:10px;height:3px;background:#2046c4"></div><div class="r" style="left:692px;top:243px;width:1px;height:3px;background:#2046c4"></div><div class="r" style="left:691px;top:243px;width:2px;height:3px;background:#000"></div><div class="r" style="left:687px;top:249px;width:2px;height:3px;background:#2046c4"></div><div class="r" style="left:687px;top:249px;width:2px;height:3px;background:#000"></div><div class="r" style="left:690px;top:249px;width:9px;height:3px;background:#2046c4"></div><div class="r" style="left:697px;top:249px;width:2px;height:3px;background:#000"></div><div class="m" style="left:704px;top:201px;width:53px;height:68px;background:#9daae4;border-color:#7386d8 #afbaea #afbaea #7386d8"><b>habitat</b></div><div class="m" style="left:706px;top:217px;width:16px;height:37px;background:#8d9de0;border-color:#6379d4 #9fade6 #9fade6 #6379d4"></div><div class="r" style="left:707px;top:219px;width:14px;height:5px;background:#2046c4"></div><div class="r" style="left:707px;top:227px;width:14px;height:5px;background:#2046c4"></div><div class="m" style="left:721px;top:217px;width:35px;height:37px;background:#8d9de0;border-color:#6379d4 #9fade6 #9fade6 #6379d4"><b>i</b></div><div class="m" style="left:723px;top:232px;width:31px;height:20px;background:#7c8fdb;border-color:#526bcf #8e9fe1 #8e9fe1 #526bcf"></div><div class="r" style="left:725px;top:235px;width:24px;height:5px;background:#2046c4"></div><div class="m" style="left:706px;top:253px;width:50px;height:14px;background:#8d9de0;border-color:#6379d4 #9fade6 #9fade6 #6379d4"></div><div class="r" style="left:708px;top:256px;width:46px;height:3px;background:#2046c4"></div><div class="m" style="left:757px;top:201px;width:22px;height:68px;background:#9daae4;border-color:#7386d8 #afbaea #afbaea #7386d8"><b>d..</b></div><div class="m" style="left:759px;top:217px;width:18px;height:50px;background:#8d9de0;border-color:#6379d4 #9fade6 #9fade6 #6379d4"></div><div class="r" style="left:760px;top:219px;width:16px;height:3px;background:#2046c4"></div><div class="r" style="left:760px;top:225px;width:16px;height:3px;background:#2046c4"></div><div class="r" style="left:760px;top:231px;width:16px;height:3px;background:#2046c4"></div><div class="r" style="left:760px;top:237px;width:16px;height:3px;background:#2046c4"></div><div class="r" style="left:774px;top:237px;width:1px;height:3px;background:#2046c4"></div><div class="r" style="left:773px;top:237px;width:2px;height:3px;background:#000"></div><div class="r" style="left:760px;top:243px;width:16px;height:3px;background:#2046c4"></div><div class="r" style="left:766px;top:243px;width:2px;height:3px;background:#2046c4"></div><div class="r" style="left:766px;top:243px;width:2px;height:3px;background:#000"></div><div class="r" style="left:760px;top:249px;width:16px;height:3px;background:#2046c4"></div><div class="r" style="left:760px;top:255px;width:2px;height:3px;background:#2046c4"></div><div class="r" style="left:760px;top:255px;width:2px;height:3px;background:#000"></div><div class="m" style="left:684px;top:269px;width:67px;height:52px;background:#9daae4;border-color:#7386d8 #afbaea #afbaea #7386d8"><b>idnotes</b></div><div class="m" style="left:686px;top:285px;width:17px;height:35px;background:#8d9de0;border-color:#6379d4 #9fade6 #9fade6 #6379d4"></div><div class="r" style="left:687px;top:287px;width:15px;height:5px;background:#2046c4"></div><div class="r" style="left:687px;top:295px;width:12px;height:5px;background:#2046c4"></div><div class="m" style="left:702px;top:285px;width:31px;height:35px;background:#8d9de0;border-color:#6379d4 #9fade6 #9fade6 #6379d4"><b>i</b></div><div class="m" style="left:704px;top:301px;width:27px;height:17px;background:#7c8fdb;border-color:#526bcf #8e9fe1 #8e9fe1 #526bcf"></div><div class="r" style="left:706px;top:304px;width:2px;height:4px;background:#2046c4"></div><div class="r" style="left:706px;top:304px;width:2px;height:4px;background:#000"></div><div class="r" style="left:709px;top:304px;width:20px;height:4px;background:#2046c4"></div><div class="m" style="left:732px;top:285px;width:17px;height:35px;background:#8d9de0;border-color:#6379d4 #9fade6 #9fade6 #6379d4"></div><div class="r" style="left:733px;top:287px;width:15px;height:3px;background:#2046c4"></div><div class="r" style="left:733px;top:293px;width:15px;height:3px;background:#2046c4"></div><div class="r" style="left:733px;top:299px;width:15px;height:3px;background:#2046c4"></div><div class="r" style="left:733px;top:305px;width:12px;height:3px;background:#2046c4"></div><div class="r" style="left:743px;top:305px;width:2px;height:3px;background:#000"></div><div class="m" style="left:752px;top:269px;width:27px;height:52px;background:#9daae4;border-color:#7386d8 #afbaea #afbaea #7386d8"><b>ill..</b></div><div class="m" style="left:754px;top:285px;width:23px;height:34px;background:#8d9de0;border-color:#6379d4 #9fade6 #9fade6 #6379d4"></div><div class="r" style="left:756px;top:288px;width:13px;height:4px;background:#2046c4"></div><div class="r" style="left:756px;top:294px;width:19px;height:4px;background:#2046c4"></div><div class="r" style="left:756px;top:300px;width:10px;height:4px;background:#2046c4"></div><div class="r" style="left:767px;top:300px;width:4px;height:4px;background:#2046c4"></div><div class="r" style="left:769px;top:300px;width:2px;height:4px;background:#000"></div><div class="r" style="left:756px;top:306px;width:6px;height:4px;background:#2046c4"></div><div class="r" style="left:764px;top:306px;width:2px;height:4px;background:#2046c4"></div><div class="r" style="left:767px;top:306px;width:2px;height:4px;background:#2046c4"></div><div class="r" style="left:771px;top:306px;width:4px;height:4px;background:#2046c4"></div><div class="r" style="left:773px;top:306px;width:2px;height:4px;background:#000"></div><div class="m" style="left:783px;top:48px;width:161px;height:193px;background:#bfc8ee;border-color:#95a4e2 #d1d8f4 #d1d8f4 #95a4e2"><b>taxon</b></div><div class="m" style="left:785px;top:64px;width:157px;height:175px;background:#acb8e9;border-color:#8294dd #bec8ef #bec8ef #8294dd"><b>taxon_description</b></div><div class="m" style="left:787px;top:80px;width:17px;height:80px;background:#9daae4;border-color:#7386d8 #afbaea #afbaea #7386d8"><b>s..</b></div><div class="m" style="left:789px;top:96px;width:13px;height:62px;background:#8d9de0;border-color:#6379d4 #9fade6 #9fade6 #6379d4"></div><div class="m" style="left:804px;top:80px;width:119px;height:80px;background:#9daae4;border-color:#7386d8 #afbaea #afbaea #7386d8"><b>name_info</b></div><div class="m" style="left:806px;top:96px;width:35px;height:31px;background:#8d9de0;border-color:#6379d4 #9fade6 #9fade6 #6379d4"><b>ra..</b></div><div class="m" style="left:808px;top:112px;width:31px;height:13px;background:#7c8fdb;border-color:#526bcf #8e9fe1 #8e9fe1 #526bcf"></div><div class="r" style="left:810px;top:115px;width:7px;height:4px;background:#2046c4"></div><div class="r" style="left:815px;top:115px;width:2px;height:4px;background:#000"></div><div class="m" style="left:841px;top:96px;width:35px;height:31px;background:#8d9de0;border-color:#6379d4 #9fade6 #9fade6 #6379d4"><b>ge..</b></div><div class="m" style="left:843px;top:112px;width:31px;height:13px;background:#7c8fdb;border-color:#526bcf #8e9fe1 #8e9fe1 #526bcf"></div><div class="r" style="left:845px;top:115px;width:27px;height:4px;background:#2046c4"></div><div class="m" style="left:876px;top:96px;width:45px;height:25px;background:#8d9de0;border-color:#6379d4 #9fade6 #9fade6 #6379d4"><b>auth..</b></div><div class="m" style="left:878px;top:112px;width:41px;height:7px;background:#7c8fdb;border-color:#526bcf #8e9fe1 #8e9fe1 #526bcf"></div><div class="m" style="left:806px;top:127px;width:35px;height:31px;background:#8d9de0;border-color:#6379d4 #9fade6 #9fade6 #6379d4"><b>par..</b></div><div class="m" style="left:808px;top:143px;width:31px;height:13px;background:#7c8fdb;border-color:#526bcf #8e9fe1 #8e9fe1 #526bcf"></div><div class="r" style="left:810px;top:146px;width:27px;height:4px;background:#2046c4"></div><div class="m" style="left:841px;top:127px;width:35px;height:31px;background:#8d9de0;border-color:#6379d4 #9fade6 #9fade6 #6379d4"><b>na..</b></div><div class="m" style="left:843px;top:143px;width:31px;height:13px;background:#7c8fdb;border-color:#526bcf #8e9fe1 #8e9fe1 #526bcf"></div><div class="r" style="left:845px;top:146px;width:27px;height:4px;background:#2046c4"></div><div class="m" style="left:876px;top:121px;width:45px;height:37px;background:#8d9de0;border-color:#6379d4 #9fade6 #9fade6 #6379d4"><b>prot..</b></div><div class="m" style="left:878px;top:137px;width:41px;height:20px;background:#7c8fdb;border-color:#526bcf #8e9fe1 #8e9fe1 #526bcf"><b>date</b></div><div class="m" style="left:923px;top:80px;width:18px;height:80px;background:#9daae4;border-color:#7386d8 #afbaea #afbaea #7386d8"><b>d..</b></div><div class="m" style="left:925px;top:96px;width:14px;height:62px;background:#8d9de0;border-color:#6379d4 #9fade6 #9fade6 #6379d4"></div><div class="r" style="left:926px;top:98px;width:2px;height:3px;background:#2046c4"></div><div class="r" style="left:930px;top:98px;width:2px;height:3px;background:#2046c4"></div><div class="r" style="left:930px;top:98px;width:2px;height:3px;background:#000"></div><div class="r" style="left:933px;top:98px;width:3px;height:3px;background:#2046c4"></div><div class="r" style="left:934px;top:98px;width:2px;height:3px;background:#000"></div><div class="r" style="left:926px;top:104px;width:12px;height:3px;background:#2046c4"></div><div class="r" style="left:926px;top:110px;width:12px;height:3px;background:#2046c4"></div><div class="r" style="left:934px;top:110px;width:2px;height:3px;background:#2046c4"></div><div class="r" style="left:934px;top:110px;width:2px;height:3px;background:#000"></div><div class="r" style="left:926px;top:116px;width:12px;height:3px;background:#2046c4"></div><div class="r" style="left:934px;top:116px;width:2px;height:3px;background:#2046c4"></div><div class="r" style="left:934px;top:116px;width:2px;height:3px;background:#000"></div><div class="r" style="left:926px;top:122px;width:12px;height:3px;background:#2046c4"></div><div class="r" style="left:934px;top:122px;width:2px;height:3px;background:#2046c4"></div><div class="r" style="left:934px;top:122px;width:2px;height:3px;background:#000"></div><div class="r" style="left:926px;top:128px;width:2px;height:3px;background:#2046c4"></div><div class="r" style="left:926px;top:128px;width:2px;height:3px;background:#000"></div><div class="r" style="left:930px;top:128px;width:8px;height:3px;background:#2046c4"></div><div class="r" style="left:926px;top:134px;width:8px;height:3px;background:#2046c4"></div><div class="r" style="left:932px;top:134px;width:2px;height:3px;background:#000"></div><div class="m" style="left:787px;top:161px;width:62px;height:54px;background:#9daae4;border-color:#7386d8 #afbaea #afbaea #7386d8"><b>habitat</b></div><div class="m" style="left:789px;top:177px;width:15px;height:37px;background:#8d9de0;border-color:#6379d4 #9fade6 #9fade6 #6379d4"></div><div class="m" style="left:803px;top:177px;width:29px;height:37px;background:#8d9de0;border-color:#6379d4 #9fade6 #9fade6 #6379d4"><b>i</b></div><div class="m" style="left:805px;top:192px;width:25px;height:20px;background:#7c8fdb;border-color:#526bcf #8e9fe1 #8e9fe1 #526bcf"></div><div class="r" style="left:807px;top:195px;width:21px;height:5px;background:#2046c4"></div><div class="m" style="left:831px;top:177px;width:17px;height:37px;background:#8d9de0;border-color:#6379d4 #9fade6 #9fade6 #6379d4"></div><div class="r" style="left:836px;top:179px;width:4px;height:3px;background:#2046c4"></div><div class="r" style="left:838px;top:179px;width:2px;height:3px;background:#000"></div><div class="r" style="left:840px;top:179px;width:7px;height:3px;background:#2046c4"></div><div class="r" style="left:832px;top:185px;width:15px;height:3px;background:#2046c4"></div><div class="r" style="left:832px;top:191px;width:15px;height:3px;background:#2046c4"></div><div class="r" style="left:832px;top:197px;width:12px;height:3px;background:#2046c4"></div><div class="r" style="left:842px;top:197px;width:2px;height:3px;background:#000"></div><div class="m" style="left:849px;top:161px;width:74px;height:77px;background:#9daae4;border-color:#7386d8 #afbaea #afbaea #7386d8"><b>idnotes</b></div><div class="m" style="left:851px;top:177px;width:40px;height:14px;background:#8d9de0;border-color:#6379d4 #9fade6 #9fade6 #6379d4"></div><div class="r" style="left:853px;top:180px;width:36px;height:2px;background:#2046c4"></div><div class="m" style="left:851px;top:190px;width:40px;height:30px;background:#8d9de0;border-color:#6379d4 #9fade6 #9fade6 #6379d4"><b>i</b></div><div class="m" style="left:853px;top:206px;width:36px;height:12px;background:#7c8fdb;border-color:#526bcf #8e9fe1 #8e9fe1 #526bcf"></div><div class="m" style="left:851px;top:220px;width:40px;height:17px;background:#8d9de0;border-color:#6379d4 #9fade6 #9fade6 #6379d4"></div><div class="r" style="left:853px;top:223px;width:32px;height:3px;background:#2046c4"></div><div class="r" style="left:883px;top:223px;width:2px;height:3px;background:#000"></div><div class="m" style="left:890px;top:177px;width:31px;height:38px;background:#8d9de0;border-color:#6379d4 #9fade6 #9fade6 #6379d4"><b>i</b></div><div class="m" style="left:892px;top:192px;width:27px;height:21px;background:#7c8fdb;border-color:#526bcf #8e9fe1 #8e9fe1 #526bcf"></div><div class="r" style="left:894px;top:195px;width:23px;height:4px;background:#2046c4"></div><div class="r" style="left:894px;top:201px;width:23px;height:4px;background:#2046c4"></div><div class="m" style="left:890px;top:215px;width:31px;height:22px;background:#8d9de0;border-color:#6379d4 #9fade6 #9fade6 #6379d4"></div><div class="r" style="left:892px;top:218px;width:27px;height:3px;background:#2046c4"></div><div class="r" style="left:892px;top:224px;width:27px;height:3px;background:#2046c4"></div><div class="m" style="left:923px;top:161px;width:18px;height:77px;background:#9daae4;border-color:#7386d8 #afbaea #afbaea #7386d8"><b>i..</b></div><div class="m" style="left:925px;top:177px;width:14px;height:59px;background:#8d9de0;border-color:#6379d4 #9fade6 #9fade6 #6379d4"></div><div class="r" style="left:926px;top:179px;width:12px;height:4px;background:#2046c4"></div><div class="r" style="left:926px;top:185px;width:10px;height:4px;background:#2046c4"></div><div class="r" style="left:926px;top:191px;width:4px;height:4px;background:#2046c4"></div><div class="r" style="left:926px;top:191px;width:2px;height:4px;background:#000"></div><div class="r" style="left:926px;top:197px;width:6px;height:4px;background:#2046c4"></div><div class="r" style="left:933px;top:197px;width:3px;height:4px;background:#2046c4"></div><div class="r" style="left:934px;top:197px;width:2px;height:4px;background:#000"></div><div class="m" style="left:787px;top:215px;width:62px;height:23px;background:#9daae4;border-color:#7386d8 #afbaea #afbaea #7386d8"><b>distribu..</b></div><div class="m" style="left:789px;top:231px;width:58px;height:5px;background:#8d9de0;border-color:#6379d4 #9fade6 #9fade6 #6379d4"></div><div class="m" style="left:783px;top:242px;width:161px;height:174px;background:#bfc8ee;border-color:#95a4e2 #d1d8f4 #d1d8f4 #95a4e2"><b>taxon</b></div><div class="m" style="left:785px;top:258px;width:157px;height:156px;background:#acb8e9;border-color:#8294dd #bec8ef #bec8ef #8294dd"><b>taxon_description</b></div><div class="m" style="left:787px;top:274px;width:79px;height:17px;background:#9daae4;border-color:#7386d8 #afbaea #afbaea #7386d8"><b>seq</b></div><div class="m" style="left:787px;top:291px;width:79px;height:120px;background:#9daae4;border-color:#7386d8 #afbaea #afbaea #7386d8"><b>name_info</b></div><div class="m" style="left:789px;top:306px;width:37px;height:31px;background:#8d9de0;border-color:#6379d4 #9fade6 #9fade6 #6379d4"><b>rank</b></div><div class="m" style="left:791px;top:322px;width:33px;height:13px;background:#7c8fdb;border-color:#526bcf #8e9fe1 #8e9fe1 #526bcf"></div><div class="r" style="left:793px;top:325px;width:4px;height:4px;background:#2046c4"></div><div class="r" style="left:797px;top:325px;width:3px;height:4px;background:#2046c4"></div><div class="r" style="left:798px;top:325px;width:2px;height:4px;background:#000"></div><div class="m" style="left:826px;top:306px;width:38px;height:31px;background:#8d9de0;border-color:#6379d4 #9fade6 #9fade6 #6379d4"><b>ge..</b></div><div class="m" style="left:828px;top:322px;width:34px;height:13px;background:#7c8fdb;border-color:#526bcf #8e9fe1 #8e9fe1 #526bcf"></div><div class="r" style="left:830px;top:325px;width:30px;height:5px;background:#2046c4"></div><div class="m" style="left:789px;top:338px;width:37px;height:31px;background:#8d9de0;border-color:#6379d4 #9fade6 #9fade6 #6379d4"><b>par..</b></div><div class="m" style="left:791px;top:354px;width:33px;height:13px;background:#7c8fdb;border-color:#526bcf #8e9fe1 #8e9fe1 #526bcf"></div><div class="r" style="left:793px;top:357px;width:29px;height:4px;background:#2046c4"></div><div class="m" style="left:826px;top:338px;width:38px;height:31px;background:#8d9de0;border-color:#6379d4 #9fade6 #9fade6 #6379d4"><b>na..</b></div><div class="m" style="left:828px;top:354px;width:34px;height:13px;background:#7c8fdb;border-color:#526bcf #8e9fe1 #8e9fe1 #526bcf"></div><div class="r" style="left:830px;top:357px;width:24px;height:4px;background:#2046c4"></div><div class="m" style="left:789px;top:370px;width:29px;height:39px;background:#8d9de0;border-color:#6379d4 #9fade6 #9fade6 #6379d4"><b>au..</b></div><div class="m" style="left:791px;top:386px;width:25px;height:21px;background:#7c8fdb;border-color:#526bcf #8e9fe1 #8e9fe1 #526bcf"></div><div class="r" style="left:793px;top:389px;width:21px;height:4px;background:#2046c4"></div><div class="r" style="left:793px;top:395px;width:4px;height:4px;background:#2046c4"></div><div class="r" style="left:797px;top:395px;width:2px;height:4px;background:#2046c4"></div><div class="r" style="left:797px;top:395px;width:2px;height:4px;background:#000"></div><div class="r" style="left:800px;top:395px;width:12px;height:4px;background:#2046c4"></div><div class="m" style="left:818px;top:370px;width:46px;height:39px;background:#8d9de0;border-color:#6379d4 #9fade6 #9fade6 #6379d4"><b>prot..</b></div><div class="m" style="left:820px;top:385px;width:42px;height:22px;background:#7c8fdb;border-color:#526bcf #8e9fe1 #8e9fe1 #526bcf"><b>date</b></div><div class="m" style="left:822px;top:401px;width:38px;height:4px;background:#6c80d6;border-color:#425cca #7e90dc #7e90dc #425cca"></div><div class="m" style="left:866px;top:274px;width:49px;height:27px;background:#9daae4;border-color:#7386d8 #afbaea #afbaea #7386d8"><b>descr..</b></div><div class="m" style="left:868px;top:290px;width:45px;height:9px;background:#8d9de0;border-color:#6379d4 #9fade6 #9fade6 #6379d4"></div><div class="m" style="left:866px;top:301px;width:49px;height:27px;background:#9daae4;border-color:#7386d8 #afbaea #afbaea #7386d8"><b>habit..</b></div><div class="m" style="left:868px;top:317px;width:45px;height:9px;background:#8d9de0;border-color:#6379d4 #9fade6 #9fade6 #6379d4"></div><div class="m" style="left:915px;top:274px;width:26px;height:54px;background:#9daae4;border-color:#7386d8 #afbaea #afbaea #7386d8"><b>d..</b></div><div class="m" style="left:917px;top:290px;width:22px;height:36px;background:#8d9de0;border-color:#6379d4 #9fade6 #9fade6 #6379d4"></div><div class="r" style="left:918px;top:292px;width:20px;height:3px;background:#2046c4"></div><div class="r" style="left:932px;top:292px;width:2px;height:3px;background:#2046c4"></div><div class="r" style="left:932px;top:292px;width:2px;height:3px;background:#000"></div><div class="r" style="left:920px;top:298px;width:18px;height:3px;background:#2046c4"></div><div class="r" style="left:930px;top:298px;width:2px;height:3px;background:#2046c4"></div><div class="r" style="left:930px;top:298px;width:2px;height:3px;background:#000"></div><div class="r" style="left:920px;top:304px;width:18px;height:3px;background:#2046c4"></div><div class="r" style="left:928px;top:304px;width:2px;height:3px;background:#2046c4"></div><div class="r" style="left:928px;top:304px;width:2px;height:3px;background:#000"></div><div class="r" style="left:918px;top:310px;width:2px;height:3px;background:#2046c4"></div><div class="r" style="left:918px;top:310px;width:2px;height:3px;background:#000"></div><div class="r" style="left:922px;top:310px;width:16px;height:3px;background:#2046c4"></div><div class="r" style="left:918px;top:316px;width:1px;height:3px;background:#2046c4"></div><div class="r" style="left:918px;top:316px;width:2px;height:3px;background:#000"></div><div class="m" style="left:866px;top:328px;width:75px;height:64px;background:#9daae4;border-color:#7386d8 #afbaea #afbaea #7386d8"><b>idnotes</b></div><div class="m" style="left:868px;top:344px;width:35px;height:31px;background:#8d9de0;border-color:#6379d4 #9fade6 #9fade6 #6379d4"><b>i</b></div><div class="m" style="left:870px;top:360px;width:31px;height:13px;background:#7c8fdb;border-color:#526bcf #8e9fe1 #8e9fe1 #526bcf"></div><div class="r" style="left:872px;top:363px;width:3px;height:4px;background:#2046c4"></div><div class="r" style="left:872px;top:363px;width:2px;height:4px;background:#000"></div><div class="r" style="left:876px;top:363px;width:1px;height:4px;background:#2046c4"></div><div class="r" style="left:875px;top:363px;width:2px;height:4px;background:#000"></div><div class="r" style="left:879px;top:363px;width:20px;height:4px;background:#2046c4"></div><div class="m" style="left:902px;top:344px;width:37px;height:31px;background:#8d9de0;border-color:#6379d4 #9fade6 #9fade6 #6379d4"><b>i</b></div><div class="m" style="left:904px;top:360px;width:33px;height:13px;background:#7c8fdb;border-color:#526bcf #8e9fe1 #8e9fe1 #526bcf"></div><div class="r" style="left:906px;top:363px;width:3px;height:4px;background:#2046c4"></div><div class="r" style="left:906px;top:363px;width:2px;height:4px;background:#000"></div><div class="r" style="left:910px;top:363px;width:3px;height:4px;background:#2046c4"></div><div class="r" style="left:911px;top:363px;width:2px;height:4px;background:#000"></div><div class="r" style="left:915px;top:363px;width:13px;height:4px;background:#2046c4"></div><div class="m" style="left:868px;top:374px;width:35px;height:16px;background:#8d9de0;border-color:#6379d4 #9fade6 #9fade6 #6379d4"></div><div class="r" style="left:870px;top:377px;width:31px;height:3px;background:#2046c4"></div><div class="r" style="left:870px;top:383px;width:16px;height:3px;background:#2046c4"></div><div class="r" style="left:887px;top:383px;width:3px;height:3px;background:#2046c4"></div><div class="r" style="left:888px;top:383px;width:2px;height:3px;background:#000"></div><div class="r" style="left:892px;top:383px;width:3px;height:3px;background:#2046c4"></div><div class="r" style="left:893px;top:383px;width:2px;height:3px;background:#000"></div><div class="m" style="left:902px;top:374px;width:37px;height:16px;background:#8d9de0;border-color:#6379d4 #9fade6 #9fade6 #6379d4"></div><div class="r" style="left:904px;top:377px;width:33px;height:3px;background:#2046c4"></div><div class="r" style="left:904px;top:383px;width:31px;height:3px;background:#2046c4"></div><div class="r" style="left:933px;top:383px;width:2px;height:3px;background:#000"></div><div class="m" style="left:866px;top:392px;width:75px;height:20px;background:#9daae4;border-color:#7386d8 #afbaea #afbaea #7386d8"><b>illustrati..</b></div><div class="tip" style="left:110px;top:220px;width:478px;height:34px">of simple or rarely a few apically branched <u>indistinctly</u> septate slender<br>paraphyses c. 0. 5 1 µm wide the apices slightly to ..</div></div><div class="abs" style="left:2px;top:528px;width:1272px;height:228px;background:#fff;border-bottom:1px solid #b0b0b0"></div><div class="hatch" style="left:3px;top:529px;width:1270px"></div><div class="panel" id="tv" style="left:3px;top:538px;width:1270px;height:215px;background:linear-gradient(#ffffff 0,#ffffff 18%,#eef0f8 50%,#e2e5f3 100%)"><svg class="abs" style="left:0;top:0" width="1270" height="215" viewBox="3 538 1270 215"><path d="M636 601L86 616M636 601L243 616M636 601L400 616M636 601L557 616M636 601L714 616M636 601L871 616M636 601L1028 616M636 601L1185 616M86 625L44 640M86 625L119 640M86 625L193 640M86 625L267 640M86 625L340 640M243 625L414 640M243 625L488 640M400 625L562 640M400 625L636 640M557 625L710 640M557 625L784 640M714 625L858 640M714 625L932 640M871 625L1006 640M871 625L1080 640M1028 625L1153 640M1185 625L1227 640M44 649L15 664M44 649L31 664M44 649L47 664M44 649L63 664M44 649L79 664M119 649L95 664M119 649L111 664M119 649L127 664M119 649L143 664M119 649L158 664M193 649L174 664M193 649L190 664M193 649L206 664M193 649L222 664M267 649L238 664M267 649L254 664M267 649L270 664M267 649L286 664M267 649L302 664M340 649L318 664M340 649L333 664M340 649L349 664M340 649L365 664M340 649L381 664M414 649L397 664M414 649L413 664M414 649L429 664M414 649L445 664M488 649L461 664M488 649L477 664M488 649L493 664M488 649L508 664M488 649L524 664M562 649L540 664M562 649L556 664M562 649L572 664M562 649L588 664M562 649L604 664M636 649L620 664M636 649L636 664M636 649L652 664M636 649L668 664M710 649L683 664M710 649L699 664M710 649L715 664M710 649L731 664M710 649L747 664M784 649L763 664M784 649L779 664M784 649L795 664M784 649L811 664M784 649L827 664M858 649L843 664M858 649L858 664M858 649L874 664M858 649L890 664M932 649L906 664M932 649L922 664M932 649L938 664M932 649L954 664M932 649L970 664M1006 649L986 664M1006 649L1002 664M1006 649L1018 664M1006 649L1033 664M1006 649L1049 664M1080 649L1065 664M1080 649L1081 664M1080 649L1097 664M1080 649L1113 664M1153 649L1129 664M1153 649L1145 664M1153 649L1161 664M1153 649L1177 664M1153 649L1193 664M1227 649L1208 664M1227 649L1224 664M1227 649L1240 664M1227 649L1256 664M15 673L12 688M15 673L21 688M31 673L30 688M31 673L39 688M47 673L48 688M47 673L57 688M63 673L66 688M63 673L75 688M79 673L83 688M95 673L92 688M95 673L101 688M111 673L110 688M111 673L119 688M127 673L128 688M127 673L137 688M143 673L146 688M143 673L155 688M158 673L164 688M174 673L173 688M174 673L181 688M190 673L190 688M190 673L199 688M206 673L208 688M206 673L217 688M222 673L226 688M238 673L235 688M238 673L244 688M254 673L253 688M254 673L262 688M270 673L271 688M270 673L279 688M286 673L288 688M286 673L297 688M302 673L306 688M318 673L315 688M318 673L324 688M333 673L333 688M333 673L342 688M349 673L351 688M349 673L360 688M365 673L369 688M365 673L377 688M381 673L386 688M397 673L395 688M397 673L404 688M413 673L413 688M413 673L422 688M429 673L431 688M429 673L440 688M445 673L449 688M461 673L458 688M461 673L467 688M477 673L475 688M477 673L484 688M493 673L493 688M493 673L502 688M508 673L511 688M508 673L520 688M524 673L529 688M540 673L538 688M540 673L547 688M556 673L556 688M556 673L564 688M572 673L573 688M572 673L582 688M588 673L591 688M588 673L600 688M604 673L609 688M620 673L618 688M620 673L627 688M636 673L636 688M636 673L645 688M652 673L654 688M652 673L662 688M668 673L671 688M683 673L680 688M683 673L689 688M699 673L698 688M699 673L707 688M715 673L716 688M715 673L725 688M731 673L734 688M731 673L743 688M747 673L752 688M763 673L760 688M763 673L769 688M779 673L778 688M779 673L787 688M795 673L796 688M795 673L805 688M811 673L814 688M811 673L823 688M827 673L832 688M843 673L841 688M843 673L850 688M858 673L858 688M858 673L867 688M874 673L876 688M874 673L885 688M890 673L894 688M906 673L903 688M906 673L912 688M922 673L921 688M922 673L930 688M938 673L939 688M938 673L948 688M954 673L956 688M954 673L965 688M970 673L974 688M986 673L983 688M986 673L992 688M1002 673L1001 688M1002 673L1010 688M1018 673L1019 688M1018 673L1028 688M1033 673L1037 688M1033 673L1046 688M1049 673L1054 688M1065 673L1063 688M1065 673L1072 688M1081 673L1081 688M1081 673L1090 688M1097 673L1099 688M1097 673L1108 688M1113 673L1117 688M1129 673L1126 688M1129 673L1135 688M1145 673L1144 688M1145 673L1152 688M1161 673L1161 688M1161 673L1170 688M1177 673L1179 688M1177 673L1188 688M1193 673L1197 688M1208 673L1206 688M1208 673L1215 688M1224 673L1224 688M1224 673L1233 688M1240 673L1242 688M1240 673L1250 688M1256 673L1259 688M12 697L14 712M12 697L26 712M30 697L37 712M30 697L49 712M48 697L61 712M66 697L72 712M66 697L84 712M83 697L96 712M101 697L107 712M101 697L119 712M119 697L130 712M137 697L142 712M137 697L154 712M155 697L165 712M173 697L177 712M173 697L189 712M190 697L200 712M208 697L212 712M208 697L223 712M226 697L235 712M244 697L247 712M244 697L258 712M262 697L270 712M279 697L282 712M279 697L293 712M297 697L305 712M315 697L316 712M315 697L328 712M333 697L340 712M351 697L351 712M351 697L363 712M369 697L375 712M386 697L386 712M386 697L398 712M404 697L409 712M422 697L421 712M422 697L433 712M440 697L444 712M440 697L456 712M458 697L467 712M475 697L479 712M475 697L491 712M493 697L502 712M511 697L514 712M511 697L526 712M529 697L537 712M547 697L549 712M547 697L560 712M564 697L572 712M582 697L584 712M582 697L595 712M600 697L607 712M618 697L619 712M618 697L630 712M636 697L642 712M654 697L653 712M654 697L665 712M671 697L677 712M689 697L688 712M689 697L700 712M707 697L712 712M725 697L723 712M725 697L735 712M743 697L746 712M760 697L758 712M760 697L770 712M778 697L781 712M796 697L793 712M796 697L805 712M814 697L816 712M832 697L828 712M832 697L839 712M850 697L851 712M850 697L863 712M867 697L874 712M885 697L886 712M885 697L898 712M903 697L909 712M921 697L921 712M921 697L932 712M939 697L944 712M956 697L956 712M956 697L967 712M974 697L979 712M992 697L991 712M992 697L1002 712M1010 697L1014 712M1028 697L1025 712M1028 697L1037 712M1046 697L1049 712M1063 697L1060 712M1063 697L1072 712M1081 697L1084 712M1099 697L1095 712M1099 697L1107 712M1117 697L1118 712M1135 697L1130 712M1135 697L1142 712M1152 697L1153 712M1170 697L1165 712M1170 697L1177 712M1188 697L1188 712M1206 697L1200 712M1206 697L1211 712M1224 697L1223 712M1242 697L1235 712M1242 697L1246 712M1259 697L1258 712M14 721L19 736M14 721L41 736M37 721L63 736M61 721L85 736M84 721L107 736M107 721L129 736M130 721L151 736M154 721L173 736M177 721L195 736M200 721L217 736M223 721L239 736M247 721L261 736M270 721L283 736M293 721L305 736M316 721L327 736M340 721L349 736M363 721L371 736M386 721L393 736M409 721L415 736M433 721L437 736M433 721L459 736M456 721L481 736M479 721L503 736M502 721L525 736M526 721L547 736M549 721L569 736M572 721L591 736M595 721L613 736M619 721L635 736M642 721L657 736M665 721L679 736M688 721L701 736M712 721L723 736M735 721L745 736M758 721L767 736M781 721L789 736M805 721L811 736M828 721L833 736M851 721L855 736M851 721L877 736M874 721L899 736M898 721L921 736M921 721L943 736M944 721L965 736M967 721L987 736M991 721L1009 736M1014 721L1031 736M1037 721L1053 736M1060 721L1075 736M1084 721L1097 736M1107 721L1119 736M1130 721L1141 736M1153 721L1163 736M1177 721L1185 736M1200 721L1207 736M1223 721L1229 736M1246 721L1251 736" stroke="#ffffff" stroke-opacity=".3" stroke-width="1.5" fill="none"/><path d="M636 553V568M636 577V592M636 601L86 616M86 625L340 640M340 649L238 664M238 673L119 688" stroke="#6a84d8" stroke-width="1.2" fill="none"/></svg><style>#tv div{position:absolute}.n{background:#a4b1e8;border:1px solid #7f93de}.d{background:#6f88d8;border:1px solid #6a84d6}.l{background:#b9c3ee;border:1px solid #8fa0e2}</style><div class="d" style="left:463px;top:6px;width:340px;height:9px"></div><div class="d" style="left:606px;top:30px;width:55px;height:9px"></div><div class="d" style="left:611px;top:54px;width:45px;height:9px"></div><div class="d" style="left:22px;top:78px;width:123px;height:9px"></div><div class="l" style="left:218px;top:78px;width:45px;height:9px"></div><div class="l" style="left:375px;top:78px;width:45px;height:9px"></div><div class="l" style="left:532px;top:78px;width:45px;height:9px"></div><div class="l" style="left:689px;top:78px;width:45px;height:9px"></div><div class="l" style="left:846px;top:78px;width:45px;height:9px"></div><div class="l" style="left:1003px;top:78px;width:45px;height:9px"></div><div class="l" style="left:1160px;top:78px;width:45px;height:9px"></div><div class="n" style="left:26px;top:102px;width:31px;height:9px"></div><div class="n" style="left:99px;top:102px;width:34px;height:9px"></div><div class="n" style="left:173px;top:102px;width:34px;height:9px"></div><div class="n" style="left:247px;top:102px;width:34px;height:9px"></div><div class="d" style="left:320px;top:102px;width:34px;height:9px"></div><div class="n" style="left:385px;top:102px;width:53px;height:9px"></div><div class="n" style="left:459px;top:102px;width:53px;height:9px"></div><div class="n" style="left:531px;top:102px;width:56px;height:9px"></div><div class="n" style="left:605px;top:102px;width:56px;height:9px"></div><div class="n" style="left:679px;top:102px;width:56px;height:9px"></div><div class="n" style="left:753px;top:102px;width:56px;height:9px"></div><div class="n" style="left:827px;top:102px;width:56px;height:9px"></div><div class="n" style="left:901px;top:102px;width:56px;height:9px"></div><div class="n" style="left:975px;top:102px;width:56px;height:9px"></div><div class="n" style="left:1049px;top:102px;width:56px;height:9px"></div><div class="n" style="left:1122px;top:102px;width:56px;height:9px"></div><div class="n" style="left:1196px;top:102px;width:56px;height:9px"></div><div class="n" style="left:6px;top:126px;width:13px;height:9px"></div><div class="n" style="left:22px;top:126px;width:13px;height:9px"></div><div class="n" style="left:38px;top:126px;width:13px;height:9px"></div><div class="n" style="left:54px;top:126px;width:13px;height:9px"></div><div class="n" style="left:70px;top:126px;width:13px;height:9px"></div><div class="n" style="left:86px;top:126px;width:13px;height:9px"></div><div class="n" style="left:102px;top:126px;width:13px;height:9px"></div><div class="n" style="left:118px;top:126px;width:13px;height:9px"></div><div class="n" style="left:134px;top:126px;width:13px;height:9px"></div><div class="n" style="left:149px;top:126px;width:13px;height:9px"></div><div class="n" style="left:165px;top:126px;width:13px;height:9px"></div><div class="n" style="left:181px;top:126px;width:13px;height:9px"></div><div class="n" style="left:197px;top:126px;width:13px;height:9px"></div><div class="n" style="left:213px;top:126px;width:13px;height:9px"></div><div class="d" style="left:229px;top:126px;width:13px;height:9px"></div><div class="n" style="left:245px;top:126px;width:13px;height:9px"></div><div class="n" style="left:261px;top:126px;width:13px;height:9px"></div><div class="n" style="left:277px;top:126px;width:13px;height:9px"></div><div class="n" style="left:293px;top:126px;width:13px;height:9px"></div><div class="n" style="left:309px;top:126px;width:13px;height:9px"></div><div class="n" style="left:324px;top:126px;width:13px;height:9px"></div><div class="n" style="left:340px;top:126px;width:13px;height:9px"></div><div class="n" style="left:356px;top:126px;width:13px;height:9px"></div><div class="n" style="left:372px;top:126px;width:13px;height:9px"></div><div class="n" style="left:388px;top:126px;width:13px;height:9px"></div><div class="n" style="left:404px;top:126px;width:13px;height:9px"></div><div class="n" style="left:420px;top:126px;width:13px;height:9px"></div><div class="n" style="left:436px;top:126px;width:13px;height:9px"></div><div class="n" style="left:452px;top:126px;width:13px;height:9px"></div><div class="n" style="left:468px;top:126px;width:13px;height:9px"></div><div class="n" style="left:484px;top:126px;width:13px;height:9px"></div><div class="n" style="left:499px;top:126px;width:13px;height:9px"></div><div class="n" style="left:515px;top:126px;width:13px;height:9px"></div><div class="n" style="left:531px;top:126px;width:13px;height:9px"></div><div class="n" style="left:547px;top:126px;width:13px;height:9px"></div><div class="n" style="left:563px;top:126px;width:13px;height:9px"></div><div class="n" style="left:579px;top:126px;width:13px;height:9px"></div><div class="n" style="left:595px;top:126px;width:13px;height:9px"></div><div class="n" style="left:611px;top:126px;width:13px;height:9px"></div><div class="n" style="left:627px;top:126px;width:13px;height:9px"></div><div class="n" style="left:643px;top:126px;width:13px;height:9px"></div><div class="n" style="left:659px;top:126px;width:13px;height:9px"></div><div class="n" style="left:674px;top:126px;width:13px;height:9px"></div><div class="n" style="left:690px;top:126px;width:13px;height:9px"></div><div class="n" style="left:706px;top:126px;width:13px;height:9px"></div><div class="n" style="left:722px;top:126px;width:13px;height:9px"></div><div class="n" style="left:738px;top:126px;width:13px;height:9px"></div><div class="n" style="left:754px;top:126px;width:13px;height:9px"></div><div class="n" style="left:770px;top:126px;width:13px;height:9px"></div><div class="n" style="left:786px;top:126px;width:13px;height:9px"></div><div class="n" style="left:802px;top:126px;width:13px;height:9px"></div><div class="n" style="left:818px;top:126px;width:13px;height:9px"></div><div class="n" style="left:834px;top:126px;width:13px;height:9px"></div><div class="n" style="left:849px;top:126px;width:13px;height:9px"></div><div class="n" style="left:865px;top:126px;width:13px;height:9px"></div><div class="n" style="left:881px;top:126px;width:13px;height:9px"></div><div class="n" style="left:897px;top:126px;width:13px;height:9px"></div><div class="n" style="left:913px;top:126px;width:13px;height:9px"></div><div class="n" style="left:929px;top:126px;width:13px;height:9px"></div><div class="n" style="left:945px;top:126px;width:13px;height:9px"></div><div class="n" style="left:961px;top:126px;width:13px;height:9px"></div><div class="n" style="left:977px;top:126px;width:13px;height:9px"></div><div class="n" style="left:993px;top:126px;width:13px;height:9px"></div><div class="n" style="left:1009px;top:126px;width:13px;height:9px"></div><div class="n" style="left:1024px;top:126px;width:13px;height:9px"></div><div class="n" style="left:1040px;top:126px;width:13px;height:9px"></div><div class="n" style="left:1056px;top:126px;width:13px;height:9px"></div><div class="n" style="left:1072px;top:126px;width:13px;height:9px"></div><div class="n" style="left:1088px;top:126px;width:13px;height:9px"></div><div class="n" style="left:1104px;top:126px;width:13px;height:9px"></div><div class="n" style="left:1120px;top:126px;width:13px;height:9px"></div><div class="n" style="left:1136px;top:126px;width:13px;height:9px"></div><div class="n" style="left:1152px;top:126px;width:13px;height:9px"></div><div class="n" style="left:1168px;top:126px;width:13px;height:9px"></div><div class="n" style="left:1184px;top:126px;width:13px;height:9px"></div><div class="n" style="left:1199px;top:126px;width:13px;height:9px"></div><div class="n" style="left:1215px;top:126px;width:13px;height:9px"></div><div class="n" style="left:1231px;top:126px;width:13px;height:9px"></div><div class="n" style="left:1247px;top:126px;width:13px;height:9px"></div><div class="n" style="left:6px;top:150px;width:7px;height:9px"></div><div class="n" style="left:15px;top:150px;width:7px;height:9px"></div><div class="n" style="left:24px;top:150px;width:7px;height:9px"></div><div class="n" style="left:33px;top:150px;width:7px;height:9px"></div><div class="n" style="left:42px;top:150px;width:7px;height:9px"></div><div class="n" style="left:51px;top:150px;width:7px;height:9px"></div><div class="n" style="left:60px;top:150px;width:7px;height:9px"></div><div class="n" style="left:69px;top:150px;width:7px;height:9px"></div><div class="n" style="left:77px;top:150px;width:7px;height:9px"></div><div class="n" style="left:86px;top:150px;width:7px;height:9px"></div><div class="n" style="left:95px;top:150px;width:7px;height:9px"></div><div class="n" style="left:104px;top:150px;width:7px;height:9px"></div><div class="n" style="left:113px;top:150px;width:7px;height:9px"></div><div class="n" style="left:122px;top:150px;width:7px;height:9px"></div><div class="n" style="left:131px;top:150px;width:7px;height:9px"></div><div class="n" style="left:140px;top:150px;width:7px;height:9px"></div><div class="n" style="left:149px;top:150px;width:7px;height:9px"></div><div class="n" style="left:158px;top:150px;width:7px;height:9px"></div><div class="n" style="left:167px;top:150px;width:7px;height:9px"></div><div class="n" style="left:175px;top:150px;width:7px;height:9px"></div><div class="n" style="left:184px;top:150px;width:7px;height:9px"></div><div class="n" style="left:193px;top:150px;width:7px;height:9px"></div><div class="n" style="left:202px;top:150px;width:7px;height:9px"></div><div class="n" style="left:211px;top:150px;width:7px;height:9px"></div><div class="n" style="left:220px;top:150px;width:7px;height:9px"></div><div class="n" style="left:229px;top:150px;width:7px;height:9px"></div><div class="n" style="left:238px;top:150px;width:7px;height:9px"></div><div class="n" style="left:247px;top:150px;width:7px;height:9px"></div><div class="n" style="left:256px;top:150px;width:7px;height:9px"></div><div class="n" style="left:265px;top:150px;width:7px;height:9px"></div><div class="n" style="left:273px;top:150px;width:7px;height:9px"></div><div class="n" style="left:282px;top:150px;width:7px;height:9px"></div><div class="n" style="left:291px;top:150px;width:7px;height:9px"></div><div class="n" style="left:300px;top:150px;width:7px;height:9px"></div><div class="n" style="left:309px;top:150px;width:7px;height:9px"></div><div class="n" style="left:318px;top:150px;width:7px;height:9px"></div><div class="n" style="left:327px;top:150px;width:7px;height:9px"></div><div class="n" style="left:336px;top:150px;width:7px;height:9px"></div><div class="n" style="left:345px;top:150px;width:7px;height:9px"></div><div class="n" style="left:354px;top:150px;width:7px;height:9px"></div><div class="n" style="left:363px;top:150px;width:7px;height:9px"></div><div class="n" style="left:371px;top:150px;width:7px;height:9px"></div><div class="n" style="left:380px;top:150px;width:7px;height:9px"></div><div class="n" style="left:389px;top:150px;width:7px;height:9px"></div><div class="n" style="left:398px;top:150px;width:7px;height:9px"></div><div class="n" style="left:407px;top:150px;width:7px;height:9px"></div><div class="n" style="left:416px;top:150px;width:7px;height:9px"></div><div class="n" style="left:425px;top:150px;width:7px;height:9px"></div><div class="n" style="left:434px;top:150px;width:7px;height:9px"></div><div class="n" style="left:443px;top:150px;width:7px;height:9px"></div><div class="n" style="left:452px;top:150px;width:7px;height:9px"></div><div class="n" style="left:461px;top:150px;width:7px;height:9px"></div><div class="n" style="left:469px;top:150px;width:7px;height:9px"></div><div class="n" style="left:478px;top:150px;width:7px;height:9px"></div><div class="n" style="left:487px;top:150px;width:7px;height:9px"></div><div class="n" style="left:496px;top:150px;width:7px;height:9px"></div><div class="n" style="left:505px;top:150px;width:7px;height:9px"></div><div class="n" style="left:514px;top:150px;width:7px;height:9px"></div><div class="n" style="left:523px;top:150px;width:7px;height:9px"></div><div class="n" style="left:532px;top:150px;width:7px;height:9px"></div><div class="n" style="left:541px;top:150px;width:7px;height:9px"></div><div class="n" style="left:550px;top:150px;width:7px;height:9px"></div><div class="n" style="left:558px;top:150px;width:7px;height:9px"></div><div class="n" style="left:567px;top:150px;width:7px;height:9px"></div><div class="n" style="left:576px;top:150px;width:7px;height:9px"></div><div class="n" style="left:585px;top:150px;width:7px;height:9px"></div><div class="n" style="left:594px;top:150px;width:7px;height:9px"></div><div class="n" style="left:603px;top:150px;width:7px;height:9px"></div><div class="n" style="left:612px;top:150px;width:7px;height:9px"></div><div class="n" style="left:621px;top:150px;width:7px;height:9px"></div><div class="n" style="left:630px;top:150px;width:7px;height:9px"></div><div class="n" style="left:639px;top:150px;width:7px;height:9px"></div><div class="n" style="left:648px;top:150px;width:7px;height:9px"></div><div class="n" style="left:656px;top:150px;width:7px;height:9px"></div><div class="n" style="left:665px;top:150px;width:7px;height:9px"></div><div class="n" style="left:674px;top:150px;width:7px;height:9px"></div><div class="n" style="left:683px;top:150px;width:7px;height:9px"></div><div class="n" style="left:692px;top:150px;width:7px;height:9px"></div><div class="n" style="left:701px;top:150px;width:7px;height:9px"></div><div class="n" style="left:710px;top:150px;width:7px;height:9px"></div><div class="n" style="left:719px;top:150px;width:7px;height:9px"></div><div class="n" style="left:728px;top:150px;width:7px;height:9px"></div><div class="n" style="left:737px;top:150px;width:7px;height:9px"></div><div class="n" style="left:746px;top:150px;width:7px;height:9px"></div><div class="n" style="left:754px;top:150px;width:7px;height:9px"></div><div class="n" style="left:763px;top:150px;width:7px;height:9px"></div><div class="n" style="left:772px;top:150px;width:7px;height:9px"></div><div class="n" style="left:781px;top:150px;width:7px;height:9px"></div><div class="n" style="left:790px;top:150px;width:7px;height:9px"></div><div class="n" style="left:799px;top:150px;width:7px;height:9px"></div><div class="n" style="left:808px;top:150px;width:7px;height:9px"></div><div class="n" style="left:817px;top:150px;width:7px;height:9px"></div><div class="n" style="left:826px;top:150px;width:7px;height:9px"></div><div class="n" style="left:835px;top:150px;width:7px;height:9px"></div><div class="n" style="left:844px;top:150px;width:7px;height:9px"></div><div class="n" style="left:852px;top:150px;width:7px;height:9px"></div><div class="n" style="left:861px;top:150px;width:7px;height:9px"></div><div class="n" style="left:870px;top:150px;width:7px;height:9px"></div><div class="n" style="left:879px;top:150px;width:7px;height:9px"></div><div class="n" style="left:888px;top:150px;width:7px;height:9px"></div><div class="n" style="left:897px;top:150px;width:7px;height:9px"></div><div class="n" style="left:906px;top:150px;width:7px;height:9px"></div><div class="n" style="left:915px;top:150px;width:7px;height:9px"></div><div class="n" style="left:924px;top:150px;width:7px;height:9px"></div><div class="n" style="left:933px;top:150px;width:7px;height:9px"></div><div class="n" style="left:942px;top:150px;width:7px;height:9px"></div><div class="n" style="left:950px;top:150px;width:7px;height:9px"></div><div class="n" style="left:959px;top:150px;width:7px;height:9px"></div><div class="n" style="left:968px;top:150px;width:7px;height:9px"></div><div class="n" style="left:977px;top:150px;width:7px;height:9px"></div><div class="n" style="left:986px;top:150px;width:7px;height:9px"></div><div class="n" style="left:995px;top:150px;width:7px;height:9px"></div><div class="n" style="left:1004px;top:150px;width:7px;height:9px"></div><div class="n" style="left:1013px;top:150px;width:7px;height:9px"></div><div class="n" style="left:1022px;top:150px;width:7px;height:9px"></div><div class="n" style="left:1031px;top:150px;width:7px;height:9px"></div><div class="n" style="left:1040px;top:150px;width:7px;height:9px"></div><div class="n" style="left:1048px;top:150px;width:7px;height:9px"></div><div class="n" style="left:1057px;top:150px;width:7px;height:9px"></div><div class="n" style="left:1066px;top:150px;width:7px;height:9px"></div><div class="n" style="left:1075px;top:150px;width:7px;height:9px"></div><div class="n" style="left:1084px;top:150px;width:7px;height:9px"></div><div class="n" style="left:1093px;top:150px;width:7px;height:9px"></div><div class="n" style="left:1102px;top:150px;width:7px;height:9px"></div><div class="n" style="left:1111px;top:150px;width:7px;height:9px"></div><div class="n" style="left:1120px;top:150px;width:7px;height:9px"></div><div class="n" style="left:1129px;top:150px;width:7px;height:9px"></div><div class="n" style="left:1138px;top:150px;width:7px;height:9px"></div><div class="n" style="left:1146px;top:150px;width:7px;height:9px"></div><div class="n" style="left:1155px;top:150px;width:7px;height:9px"></div><div class="n" style="left:1164px;top:150px;width:7px;height:9px"></div><div class="n" style="left:1173px;top:150px;width:7px;height:9px"></div><div class="n" style="left:1182px;top:150px;width:7px;height:9px"></div><div class="n" style="left:1191px;top:150px;width:7px;height:9px"></div><div class="n" style="left:1200px;top:150px;width:7px;height:9px"></div><div class="n" style="left:1209px;top:150px;width:7px;height:9px"></div><div class="n" style="left:1218px;top:150px;width:7px;height:9px"></div><div class="n" style="left:1227px;top:150px;width:7px;height:9px"></div><div class="n" style="left:1236px;top:150px;width:7px;height:9px"></div><div class="n" style="left:1244px;top:150px;width:7px;height:9px"></div><div class="n" style="left:1253px;top:150px;width:7px;height:9px"></div><div style="left:113px;top:150px;width:7px;height:9px;background:#f3c6c6;border:1px solid #1a44c8"></div><div class="n" style="left:6px;top:174px;width:10px;height:9px"></div><div class="n" style="left:18px;top:174px;width:10px;height:9px"></div><div class="n" style="left:29px;top:174px;width:10px;height:9px"></div><div class="n" style="left:41px;top:174px;width:10px;height:9px"></div><div class="n" style="left:53px;top:174px;width:10px;height:9px"></div><div class="n" style="left:64px;top:174px;width:10px;height:9px"></div><div class="n" style="left:76px;top:174px;width:10px;height:9px"></div><div class="n" style="left:88px;top:174px;width:10px;height:9px"></div><div class="n" style="left:99px;top:174px;width:10px;height:9px"></div><div class="n" style="left:111px;top:174px;width:10px;height:9px"></div><div class="n" style="left:122px;top:174px;width:10px;height:9px"></div><div class="n" style="left:134px;top:174px;width:10px;height:9px"></div><div class="n" style="left:146px;top:174px;width:10px;height:9px"></div><div class="n" style="left:157px;top:174px;width:10px;height:9px"></div><div class="n" style="left:169px;top:174px;width:10px;height:9px"></div><div class="n" style="left:181px;top:174px;width:10px;height:9px"></div><div class="n" style="left:192px;top:174px;width:10px;height:9px"></div><div class="n" style="left:204px;top:174px;width:10px;height:9px"></div><div class="n" style="left:215px;top:174px;width:10px;height:9px"></div><div class="n" style="left:227px;top:174px;width:10px;height:9px"></div><div class="n" style="left:239px;top:174px;width:10px;height:9px"></div><div class="n" style="left:250px;top:174px;width:10px;height:9px"></div><div class="n" style="left:262px;top:174px;width:10px;height:9px"></div><div class="n" style="left:274px;top:174px;width:10px;height:9px"></div><div class="n" style="left:285px;top:174px;width:10px;height:9px"></div><div class="n" style="left:297px;top:174px;width:10px;height:9px"></div><div class="n" style="left:308px;top:174px;width:10px;height:9px"></div><div class="n" style="left:320px;top:174px;width:10px;height:9px"></div><div class="n" style="left:332px;top:174px;width:10px;height:9px"></div><div class="n" style="left:343px;top:174px;width:10px;height:9px"></div><div class="n" style="left:355px;top:174px;width:10px;height:9px"></div><div class="n" style="left:367px;top:174px;width:10px;height:9px"></div><div class="n" style="left:378px;top:174px;width:10px;height:9px"></div><div class="n" style="left:390px;top:174px;width:10px;height:9px"></div><div class="n" style="left:401px;top:174px;width:10px;height:9px"></div><div class="n" style="left:413px;top:174px;width:10px;height:9px"></div><div class="n" style="left:425px;top:174px;width:10px;height:9px"></div><div class="n" style="left:436px;top:174px;width:10px;height:9px"></div><div class="n" style="left:448px;top:174px;width:10px;height:9px"></div><div class="n" style="left:459px;top:174px;width:10px;height:9px"></div><div class="n" style="left:471px;top:174px;width:10px;height:9px"></div><div class="n" style="left:483px;top:174px;width:10px;height:9px"></div><div class="n" style="left:494px;top:174px;width:10px;height:9px"></div><div class="n" style="left:506px;top:174px;width:10px;height:9px"></div><div class="n" style="left:518px;top:174px;width:10px;height:9px"></div><div class="n" style="left:529px;top:174px;width:10px;height:9px"></div><div class="n" style="left:541px;top:174px;width:10px;height:9px"></div><div class="n" style="left:552px;top:174px;width:10px;height:9px"></div><div class="n" style="left:564px;top:174px;width:10px;height:9px"></div><div class="n" style="left:576px;top:174px;width:10px;height:9px"></div><div class="n" style="left:587px;top:174px;width:10px;height:9px"></div><div class="n" style="left:599px;top:174px;width:10px;height:9px"></div><div class="n" style="left:611px;top:174px;width:10px;height:9px"></div><div class="n" style="left:622px;top:174px;width:10px;height:9px"></div><div class="n" style="left:634px;top:174px;width:10px;height:9px"></div><div class="n" style="left:645px;top:174px;width:10px;height:9px"></div><div class="n" style="left:657px;top:174px;width:10px;height:9px"></div><div class="n" style="left:669px;top:174px;width:10px;height:9px"></div><div class="n" style="left:680px;top:174px;width:10px;height:9px"></div><div class="n" style="left:692px;top:174px;width:10px;height:9px"></div><div class="n" style="left:704px;top:174px;width:10px;height:9px"></div><div class="n" style="left:715px;top:174px;width:10px;height:9px"></div><div class="n" style="left:727px;top:174px;width:10px;height:9px"></div><div class="n" style="left:738px;top:174px;width:10px;height:9px"></div><div class="n" style="left:750px;top:174px;width:10px;height:9px"></div><div class="n" style="left:762px;top:174px;width:10px;height:9px"></div><div class="n" style="left:773px;top:174px;width:10px;height:9px"></div><div class="n" style="left:785px;top:174px;width:10px;height:9px"></div><div class="n" style="left:797px;top:174px;width:10px;height:9px"></div><div class="n" style="left:808px;top:174px;width:10px;height:9px"></div><div class="n" style="left:820px;top:174px;width:10px;height:9px"></div><div class="n" style="left:831px;top:174px;width:10px;height:9px"></div><div class="n" style="left:843px;top:174px;width:10px;height:9px"></div><div class="n" style="left:855px;top:174px;width:10px;height:9px"></div><div class="n" style="left:866px;top:174px;width:10px;height:9px"></div><div class="n" style="left:878px;top:174px;width:10px;height:9px"></div><div class="n" style="left:890px;top:174px;width:10px;height:9px"></div><div class="n" style="left:901px;top:174px;width:10px;height:9px"></div><div class="n" style="left:913px;top:174px;width:10px;height:9px"></div><div class="n" style="left:924px;top:174px;width:10px;height:9px"></div><div class="n" style="left:936px;top:174px;width:10px;height:9px"></div><div class="n" style="left:948px;top:174px;width:10px;height:9px"></div><div class="n" style="left:959px;top:174px;width:10px;height:9px"></div><div class="n" style="left:971px;top:174px;width:10px;height:9px"></div><div class="n" style="left:983px;top:174px;width:10px;height:9px"></div><div class="n" style="left:994px;top:174px;width:10px;height:9px"></div><div class="n" style="left:1006px;top:174px;width:10px;height:9px"></div><div class="n" style="left:1017px;top:174px;width:10px;height:9px"></div><div class="n" style="left:1029px;top:174px;width:10px;height:9px"></div><div class="n" style="left:1041px;top:174px;width:10px;height:9px"></div><div class="n" style="left:1052px;top:174px;width:10px;height:9px"></div><div class="n" style="left:1064px;top:174px;width:10px;height:9px"></div><div class="n" style="left:1076px;top:174px;width:10px;height:9px"></div><div class="n" style="left:1087px;top:174px;width:10px;height:9px"></div><div class="n" style="left:1099px;top:174px;width:10px;height:9px"></div><div class="n" style="left:1110px;top:174px;width:10px;height:9px"></div><div class="n" style="left:1122px;top:174px;width:10px;height:9px"></div><div class="n" style="left:1134px;top:174px;width:10px;height:9px"></div><div class="n" style="left:1145px;top:174px;width:10px;height:9px"></div><div class="n" style="left:1157px;top:174px;width:10px;height:9px"></div><div class="n" style="left:1169px;top:174px;width:10px;height:9px"></div><div class="n" style="left:1180px;top:174px;width:10px;height:9px"></div><div class="n" style="left:1192px;top:174px;width:10px;height:9px"></div><div class="n" style="left:1203px;top:174px;width:10px;height:9px"></div><div class="n" style="left:1215px;top:174px;width:10px;height:9px"></div><div class="n" style="left:1227px;top:174px;width:10px;height:9px"></div><div class="n" style="left:1238px;top:174px;width:10px;height:9px"></div><div class="n" style="left:1250px;top:174px;width:10px;height:9px"></div><div class="n" style="left:8px;top:198px;width:17px;height:9px"></div><div class="n" style="left:30px;top:198px;width:17px;height:9px"></div><div class="n" style="left:52px;top:198px;width:17px;height:9px"></div><div class="n" style="left:72px;top:198px;width:21px;height:9px"></div><div class="n" style="left:94px;top:198px;width:21px;height:9px"></div><div class="n" style="left:118px;top:198px;width:17px;height:9px"></div><div class="n" style="left:140px;top:198px;width:17px;height:9px"></div><div class="n" style="left:162px;top:198px;width:17px;height:9px"></div><div class="n" style="left:184px;top:198px;width:17px;height:9px"></div><div class="n" style="left:206px;top:198px;width:17px;height:9px"></div><div class="n" style="left:228px;top:198px;width:17px;height:9px"></div><div class="n" style="left:248px;top:198px;width:21px;height:9px"></div><div class="n" style="left:270px;top:198px;width:21px;height:9px"></div><div class="n" style="left:292px;top:198px;width:21px;height:9px"></div><div class="n" style="left:316px;top:198px;width:17px;height:9px"></div><div class="n" style="left:336px;top:198px;width:21px;height:9px"></div><div class="n" style="left:360px;top:198px;width:17px;height:9px"></div><div class="n" style="left:382px;top:198px;width:17px;height:9px"></div><div class="n" style="left:404px;top:198px;width:17px;height:9px"></div><div class="n" style="left:426px;top:198px;width:17px;height:9px"></div><div class="n" style="left:448px;top:198px;width:17px;height:9px"></div><div class="n" style="left:468px;top:198px;width:21px;height:9px"></div><div class="n" style="left:490px;top:198px;width:21px;height:9px"></div><div class="n" style="left:514px;top:198px;width:17px;height:9px"></div><div class="n" style="left:536px;top:198px;width:17px;height:9px"></div><div class="n" style="left:558px;top:198px;width:17px;height:9px"></div><div class="n" style="left:580px;top:198px;width:17px;height:9px"></div><div class="n" style="left:602px;top:198px;width:17px;height:9px"></div><div class="n" style="left:624px;top:198px;width:17px;height:9px"></div><div class="n" style="left:644px;top:198px;width:21px;height:9px"></div><div class="n" style="left:666px;top:198px;width:21px;height:9px"></div><div class="n" style="left:688px;top:198px;width:21px;height:9px"></div><div class="n" style="left:712px;top:198px;width:17px;height:9px"></div><div class="n" style="left:734px;top:198px;width:17px;height:9px"></div><div class="n" style="left:756px;top:198px;width:17px;height:9px"></div><div class="n" style="left:778px;top:198px;width:17px;height:9px"></div><div class="n" style="left:800px;top:198px;width:17px;height:9px"></div><div class="n" style="left:822px;top:198px;width:17px;height:9px"></div><div class="n" style="left:842px;top:198px;width:21px;height:9px"></div><div class="n" style="left:864px;top:198px;width:21px;height:9px"></div><div class="n" style="left:886px;top:198px;width:21px;height:9px"></div><div class="n" style="left:908px;top:198px;width:21px;height:9px"></div><div class="n" style="left:932px;top:198px;width:17px;height:9px"></div><div class="n" style="left:954px;top:198px;width:17px;height:9px"></div><div class="n" style="left:976px;top:198px;width:17px;height:9px"></div><div class="n" style="left:998px;top:198px;width:17px;height:9px"></div><div class="n" style="left:1020px;top:198px;width:17px;height:9px"></div><div class="n" style="left:1040px;top:198px;width:21px;height:9px"></div><div class="n" style="left:1062px;top:198px;width:21px;height:9px"></div><div class="n" style="left:1084px;top:198px;width:21px;height:9px"></div><div class="n" style="left:1106px;top:198px;width:21px;height:9px"></div><div class="n" style="left:1128px;top:198px;width:21px;height:9px"></div><div class="n" style="left:1150px;top:198px;width:21px;height:9px"></div><div class="n" style="left:1172px;top:198px;width:21px;height:9px"></div><div class="n" style="left:1194px;top:198px;width:21px;height:9px"></div><div class="n" style="left:1216px;top:198px;width:21px;height:9px"></div><div class="n" style="left:1238px;top:198px;width:21px;height:9px"></div><div style="left:111px;top:134px;width:907px;height:17px;background:#4463c9;color:#fff;font-size:14px;line-height:17px;white-space:nowrap;padding-left:3px;letter-spacing:.19px">of simple, or rarely a few apically branched, indistinctly septate, slender paraphyses, c. 0.5-1 µm wide, the apices slightly to distinctly swollen.</div></div><div class="abs" style="left:0;top:757px;width:1276px;height:22px;background:#ededed"></div><div class="abs" style="left:4px;top:760px;line-height:18px;font-size:14px;white-space:nowrap;color:#111;letter-spacing:.22px">db:open("AbscondFloraEG1","AbscondFloraEG1.xml")/volume/taxon/taxon_description/description/hamathecium/text()</div><div class="abs" style="left:1206px;top:760px;width:67px;height:17px;border:1px solid #a9a9a9;background:#f4f4f4"><div class="abs" style="left:2px;top:1px;width:8px;height:13px;background:#d3d8f0"></div><span class="abs" style="left:12px;top:0;line-height:15px;font-size:13.2px;white-space:nowrap;letter-spacing:.25px">132 MB</span></div></div><div style="position:absolute;left:0;top:0;width:1280px;height:1px;background:#3a1640"></div></body></html>
